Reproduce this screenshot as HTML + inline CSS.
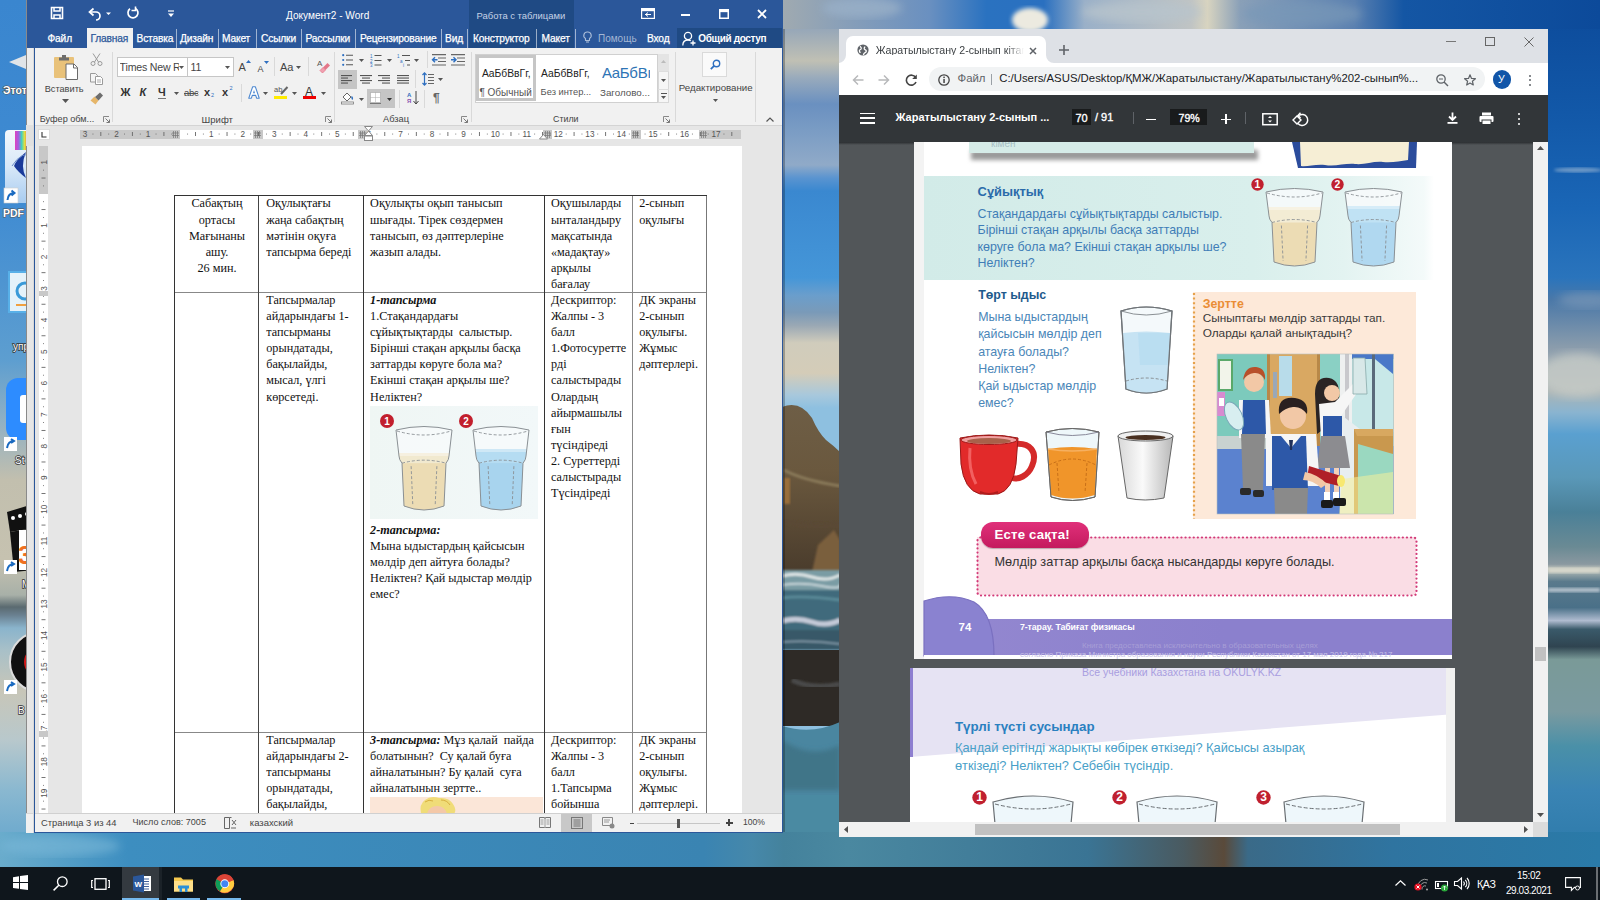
<!DOCTYPE html>
<html><head><meta charset="utf-8">
<style>
*{box-sizing:border-box}
html,body{margin:0;padding:0}
body{width:1600px;height:900px;position:relative;overflow:hidden;font-family:"Liberation Sans",sans-serif;background:#2a6fb8}
.a{position:absolute}
.t{position:absolute;white-space:nowrap;line-height:1}
.s{font-family:"Liberation Serif",serif}
svg{position:absolute;overflow:visible}
</style></head><body>
<div class="a" style="left:0;top:0;width:1600px;height:868px;overflow:hidden">
<div class="a" style="left:0px;top:0px;width:1600px;height:868px;background:linear-gradient(180deg,#1a5cae 0,#2a78c8 260px,#6f98b8 450px,#7d9aa8 540px,#5d8296 600px,#6a94ac 680px,#3f86bc 800px,#3a80b8 868px)"></div>
<div class="a" style="left:0px;top:0px;width:34px;height:868px;background:linear-gradient(180deg,#3a86cf 0,#3f8bd2 200px,#5d9ed0 360px,#8fb0c4 420px,#c2bfae 480px,#c6c2b0 560px,#a8b0a8 595px,#5a6a70 607px,#6a8090 615px,#8ab4cc 628px,#a8c0c8 650px,#c8c6b8 690px,#b8c8cc 740px,#8ab8d0 790px,#5aa0cc 868px)"></div>
<svg style="left:782px;top:0" width="58" height="868" viewBox="0 0 58 868"><defs><filter id="bl" x="-20%" y="-5%" width="140%" height="110%"><feGaussianBlur stdDeviation="2.5"/></filter><filter id="bl1"><feGaussianBlur stdDeviation="1"/></filter><linearGradient id="msky" x1="0" y1="0" x2="0" y2="1"><stop offset="0" stop-color="#7a92b0"/><stop offset=".035" stop-color="#98a8b8"/><stop offset=".07" stop-color="#c0c0b4"/><stop offset=".09" stop-color="#98aabc"/><stop offset=".12" stop-color="#6a90c0"/><stop offset=".15" stop-color="#7a9cc4"/><stop offset=".19" stop-color="#90aac8"/><stop offset=".205" stop-color="#5a94d0"/><stop offset=".22" stop-color="#3a88d0"/><stop offset=".32" stop-color="#4596d8"/><stop offset=".34" stop-color="#6a9ecc"/><stop offset=".36" stop-color="#7a9ab8"/><stop offset=".375" stop-color="#9aa8b4"/><stop offset=".395" stop-color="#d0ccbc"/><stop offset=".43" stop-color="#d4ccb8"/><stop offset=".455" stop-color="#a8c8dc"/><stop offset=".47" stop-color="#8ec0e0"/><stop offset="1" stop-color="#8ec0e0"/></linearGradient><linearGradient id="rk" x1="0" x2="0" y1="0" y2="1"><stop offset="0" stop-color="#6e5e46"/><stop offset=".4" stop-color="#6a583e"/><stop offset="1" stop-color="#4a3c2c"/></linearGradient></defs><rect width="58" height="868" fill="url(#msky)"/><path d="M0 407 Q18 400 30 418 Q36 432 44 440 Q52 446 58 452 L58 572 L0 572z" fill="url(#rk)"/><rect x="2" y="478" width="6" height="26" fill="#b07a3a" filter="url(#bl1)" opacity=".7"/><path d="M36 545 L52 530 L58 540 L58 572 L30 572z" fill="#7a5e3e" filter="url(#bl1)"/><g filter="url(#bl1)"><rect x="-2" y="570" width="62" height="22" fill="#7a9ca4"/><path d="M0 576 Q15 572 30 577 T58 575" stroke="#dfe6e6" stroke-width="3" fill="none"/><path d="M0 585 Q20 582 40 586 T58 584" stroke="#c8d6da" stroke-width="2" fill="none"/><rect x="-2" y="590" width="62" height="60" fill="#3f6a7c"/><path d="M0 598 Q20 595 58 600" stroke="#5a8a98" stroke-width="3" fill="none"/><path d="M0 621 Q15 617 30 622 T58 620" stroke="#c4cad8" stroke-width="5" fill="none"/><rect x="-2" y="630" width="62" height="20" fill="#385868"/><path d="M0 642 Q30 640 58 644" stroke="#8aa0b0" stroke-width="1.5" fill="none"/></g><path d="M2 470 Q20 480 58 486" stroke="#8a7a5a" stroke-width="3" fill="none" filter="url(#bl1)"/><path d="M0 520 Q30 530 58 525" stroke="#5a4a36" stroke-width="6" fill="none" filter="url(#bl1)"/><rect x="0" y="650" width="58" height="76" fill="#2e2a26"/><path d="M10 680 Q30 690 58 684" stroke="#4a4a48" stroke-width="5" fill="none" filter="url(#bl1)"/><path d="M0 726 Q30 735 58 722 L58 868 L0 868z" fill="#4a86a0"/><path d="M0 740 Q30 760 58 745 L58 790 L0 790z" fill="#3f7488" filter="url(#bl)"/><rect x="0" y="795" width="58" height="73" fill="#4a8aa2"/><rect x="0" y="0" width="3" height="868" fill="#000" opacity=".25"/></svg>
<svg style="left:1548px;top:0" width="52" height="868" viewBox="0 0 52 868"><defs><filter id="rb"><feGaussianBlur stdDeviation="5"/></filter><filter id="rb2"><feGaussianBlur stdDeviation="1.5"/></filter><linearGradient id="rg" x1="0" x2="0" y1="0" y2="1"><stop offset="0" stop-color="#0c4a9a"/><stop offset=".13" stop-color="#1258a8"/><stop offset=".24" stop-color="#1a66b6"/><stop offset=".32" stop-color="#2a74bc"/><stop offset=".345" stop-color="#4a78a8"/><stop offset=".40" stop-color="#8a9cac"/><stop offset=".45" stop-color="#aab4b4"/><stop offset=".475" stop-color="#8ab4d0"/><stop offset=".50" stop-color="#5aa0d0"/><stop offset=".55" stop-color="#5a98b8"/><stop offset=".59" stop-color="#4a8098"/><stop offset=".63" stop-color="#6a8a94"/><stop offset=".65" stop-color="#8a98a0"/><stop offset=".655" stop-color="#c0c4bc"/><stop offset=".67" stop-color="#5a7a8c"/><stop offset=".70" stop-color="#4a7088"/><stop offset=".715" stop-color="#b0bcd0"/><stop offset=".725" stop-color="#3a5a6a"/><stop offset=".745" stop-color="#2f4450"/><stop offset=".76" stop-color="#7a9a98"/><stop offset=".82" stop-color="#7a9aa0"/><stop offset=".86" stop-color="#4a90a8"/><stop offset=".91" stop-color="#3a84b4"/><stop offset="1" stop-color="#2a78a8"/></linearGradient></defs><rect width="52" height="868" fill="url(#rg)"/><ellipse cx="30" cy="170" rx="24" ry="2.5" fill="#a8c0d8" filter="url(#rb2)" opacity=".6"/><ellipse cx="30" cy="375" rx="40" ry="22" fill="#c8ccc8" filter="url(#rb)" opacity=".8"/><ellipse cx="40" cy="300" rx="30" ry="8" fill="#7a98b8" filter="url(#rb)" opacity=".7"/><rect x="0" y="568" width="52" height="5" fill="#d8d8cc" filter="url(#rb2)"/><rect x="0" y="588" width="52" height="4" fill="#d0d8e0" filter="url(#rb2)" opacity=".8"/></svg>
<svg style="left:782px;top:0" width="818" height="29" viewBox="0 0 818 29"><defs><filter id="tb"><feGaussianBlur stdDeviation="4"/></filter><filter id="tb2"><feGaussianBlur stdDeviation="2"/></filter><linearGradient id="tg" x1="0" x2="1"><stop offset="0" stop-color="#a0aab0"/><stop offset=".07" stop-color="#8aa0b8"/><stop offset=".18" stop-color="#6a90c0"/><stop offset=".25" stop-color="#2a72c0"/><stop offset=".32" stop-color="#2a70c0"/><stop offset=".37" stop-color="#9ab0c8"/><stop offset=".50" stop-color="#c0c4c4"/><stop offset=".52" stop-color="#d8d4c0"/><stop offset=".56" stop-color="#8aa0b8"/><stop offset=".70" stop-color="#5a80b0"/><stop offset=".76" stop-color="#1456a4"/><stop offset="1" stop-color="#0c4a9a"/></linearGradient></defs><rect width="818" height="29" fill="url(#tg)"/><ellipse cx="248" cy="20" rx="18" ry="12" fill="#eceae0" filter="url(#tb2)"/><ellipse cx="80" cy="8" rx="40" ry="10" fill="#9ab0c8" filter="url(#tb)" opacity=".8"/><ellipse cx="360" cy="12" rx="60" ry="10" fill="#b8c4cc" filter="url(#tb)" opacity=".8"/><ellipse cx="520" cy="14" rx="60" ry="12" fill="#7898b8" filter="url(#tb)" opacity=".7"/></svg>
<svg style="left:0;top:832px" width="1600" height="36" viewBox="0 0 1600 36"><defs><filter id="bb"><feGaussianBlur stdDeviation="4"/></filter><linearGradient id="bg2" x1="0" x2="1"><stop offset="0" stop-color="#6aaccc"/><stop offset=".03" stop-color="#5aa2c8"/><stop offset=".08" stop-color="#3d8ec0"/><stop offset=".44" stop-color="#3a84b2"/><stop offset=".47" stop-color="#4688aa"/><stop offset=".49" stop-color="#44829c"/><stop offset=".53" stop-color="#4a88a0"/><stop offset=".68" stop-color="#3a7494"/><stop offset=".74" stop-color="#4a5a60"/><stop offset=".765" stop-color="#5a4a3a"/><stop offset=".78" stop-color="#3a6a88"/><stop offset=".87" stop-color="#2f74a0"/><stop offset="1" stop-color="#2a7aa8"/></linearGradient></defs><rect width="1600" height="36" fill="url(#bg2)"/><ellipse cx="60" cy="14" rx="60" ry="10" fill="#7ab8d8" filter="url(#bb)" opacity=".6"/></svg>
<svg style="left:0;top:0" width="34" height="868" viewBox="0 0 34 868"><path d="M9 62 L26 55 L26 69z" fill="#e0e4e8"/><text x="3" y="94" font-size="10.5" fill="#fff" font-weight="bold" font-family="Liberation Sans" style="paint-order:stroke" stroke="#555" stroke-width="1.2">Этот</text><defs><linearGradient id="pdfg" x1="0" y1="0" x2="0" y2="1"><stop offset="0" stop-color="#f4f8fc"/><stop offset=".5" stop-color="#d8e8f8"/><stop offset="1" stop-color="#a8ccf0"/></linearGradient><linearGradient id="rbw" x1="0" x2="1"><stop offset="0" stop-color="#e040c0"/><stop offset=".3" stop-color="#a060e0"/><stop offset=".55" stop-color="#40d0c0"/><stop offset=".8" stop-color="#e0e040"/><stop offset="1" stop-color="#f08040"/></linearGradient></defs><rect x="5" y="130" width="30" height="73" rx="4" fill="url(#pdfg)"/><rect x="15" y="131" width="12" height="19" fill="url(#rbw)"/><path d="M26 152 Q16 160 14 166 Q18 172 26 178 Q20 166 26 152z" fill="#1a3a9a"/><path d="M12 166 Q22 150 34 156" stroke="#6a8ac8" stroke-width="1" fill="none"/><rect x="4" y="188" width="14" height="15" fill="#fff" stroke="#ccc" stroke-width=".6"/><path d="M7.5 200 Q8 193 14.5 193 M11.5 190.5l3 2.5-3 2.5" stroke="#1a6ac0" stroke-width="2" fill="none"/><text x="3" y="217" font-size="10.5" fill="#fff" font-weight="bold" font-family="Liberation Sans" style="paint-order:stroke" stroke="#555" stroke-width="1.2">PDF</text><rect x="9" y="272" width="26" height="40" fill="#e4f2fa" stroke="#58b0e8" stroke-width="2"/><circle cx="25" cy="291" r="8" fill="none" stroke="#3a9ad8" stroke-width="3"/><rect x="16" y="304" width="14" height="2" fill="#f0a040"/><text x="13" y="350" font-size="10" fill="#fff" font-family="Liberation Sans" style="paint-order:stroke" stroke="#333" stroke-width="1.5">упр</text><rect x="6" y="378" width="32" height="62" rx="12" fill="#2d8cff"/><rect x="20" y="395" width="14" height="28" rx="3" fill="#fff"/><rect x="4" y="437" width="13" height="14" fill="#fff"/><path d="M7 448 Q8 441 14 441 M11 439l3 2-3 2" stroke="#1a6ac0" stroke-width="2" fill="none"/><text x="15" y="464" font-size="10" fill="#fff" font-family="Liberation Sans" style="paint-order:stroke" stroke="#333" stroke-width="1.5">St</text><path d="M7 512 L30 505 L34 508 L34 528 L10 532z" fill="#111"/><circle cx="13" cy="518" r="2" fill="#fff"/><circle cx="20" cy="516" r="2" fill="#fff"/><circle cx="27" cy="514" r="2" fill="#fff"/><path d="M10 532 L34 528 L34 570 L14 572z" fill="#111"/><rect x="19" y="530" width="15" height="40" fill="#fff"/><text x="18" y="564" font-size="26" fill="#f07020" font-weight="bold" font-family="Liberation Sans">3</text><rect x="4" y="560" width="13" height="14" fill="#fff"/><path d="M7 571 Q8 564 14 564 M11 562l3 2-3 2" stroke="#1a6ac0" stroke-width="2" fill="none"/><text x="22" y="588" font-size="10" fill="#fff" font-family="Liberation Sans" style="paint-order:stroke" stroke="#333" stroke-width="1.5">M</text><circle cx="40" cy="662" r="30" fill="#111" stroke="#ddd" stroke-width="2"/><circle cx="40" cy="662" r="16" fill="#d01818"/><rect x="4" y="680" width="13" height="14" fill="#fff"/><path d="M7 691 Q8 684 14 684 M11 682l3 2-3 2" stroke="#1a6ac0" stroke-width="2" fill="none"/><text x="18" y="714" font-size="10" fill="#fff" font-family="Liberation Sans" style="paint-order:stroke" stroke="#333" stroke-width="1.5">B</text></svg>
</div>
<div class="a" style="left:26px;top:0px;width:8px;height:833px;background:#ececec"></div>
<div class="a" style="left:26px;top:0px;width:8px;height:48px;background:#2b579a"></div>
<div class="a" style="left:26px;top:0px;width:1px;height:833px;background:#8a8a8a"></div>
<div class="a" style="left:26px;top:125px;width:8px;height:21px;background:#e0e0e0"></div>
<div class="a" style="left:27px;top:146px;width:6px;height:667px;background:#e6e6e6"></div>
<div class="a" style="left:26px;top:813px;width:8px;height:20px;background:#f0f0f0;border-top:1px solid #d6d6d6"></div>
<div class="a" style="left:33px;top:48px;width:1px;height:785px;background:#d8d8d8"></div>
<div class="a" style="left:34px;top:0;width:749px;height:833px;overflow:hidden;background:#e6e6e6">
<div class="a" style="left:0px;top:0px;width:749px;height:48px;background:#2b579a"></div>
<div class="a" style="left:435px;top:0px;width:105px;height:48px;background:#1f4a84"></div>
<div class="a" style="left:643px;top:28px;width:106px;height:20px;background:#1f4a84"></div>
<svg style="left:16px;top:6px" width="14" height="14" viewBox="0 0 14 14"><path d="M1.5 1.5h11v11h-11z" fill="none" stroke="#fff" stroke-width="1.6"/><path d="M4 1.5v3.5h6v-3.5" fill="none" stroke="#fff" stroke-width="1.5"/><path d="M4 12.5v-3.5h6v3.5" fill="none" stroke="#fff" stroke-width="1.5"/></svg>
<svg style="left:53px;top:7px" width="24" height="13" viewBox="0 0 24 13"><path d="M3 5h6a4 4 0 0 1 0 8" fill="none" stroke="#fff" stroke-width="1.7"/><path d="M6.5 1.5L2.5 5l4 3.5" fill="none" stroke="#fff" stroke-width="1.7"/><path d="M19 5.5l2.5 2.5 2.5-2.5z" fill="#fff"/></svg>
<svg style="left:92px;top:6px" width="14" height="14" viewBox="0 0 14 14"><path d="M9.5 2.5A5 5 0 1 1 4 2.8" fill="none" stroke="#fff" stroke-width="1.7"/><path d="M9.5 0.5v4h-4" fill="none" stroke="#fff" stroke-width="1.6"/></svg>
<svg style="left:133px;top:10px" width="8" height="8" viewBox="0 0 8 8"><path d="M1 1h6" stroke="#fff" stroke-width="1.2"/><path d="M1 3.5h6L4 7z" fill="#fff"/></svg>
<div class="t" style="left:252px;top:10.5px;color:#fff;font-size:10.1px">Документ2 - Word</div>
<div class="t" style="left:442.5px;top:11px;color:#c5d2e6;font-size:9.45px">Работа с таблицами</div>
<svg style="left:607px;top:8px" width="14" height="11" viewBox="0 0 14 11"><rect x="0.6" y="0.6" width="12.8" height="9.8" fill="none" stroke="#fff" stroke-width="1.2"/><rect x="0.6" y="0.6" width="12.8" height="2.6" fill="#fff"/><path d="M4 6.5h6M7 4.5l-2.5 2 2.5 2" stroke="#fff" stroke-width="1" fill="none"/></svg>
<div class="a" style="left:647px;top:14px;width:9px;height:2px;background:#fff"></div>
<svg style="left:685px;top:8.5px" width="10" height="10" viewBox="0 0 10 10"><rect x="0.75" y="0.75" width="8.5" height="8.5" fill="none" stroke="#fff" stroke-width="1.5"/><rect x="0.75" y="0.75" width="8.5" height="2.4" fill="#fff"/></svg>
<svg style="left:723px;top:8.5px" width="10" height="10" viewBox="0 0 10 10"><path d="M1 1l8 8M9 1l-8 8" stroke="#fff" stroke-width="1.8"/></svg>
<div class="a" style="left:53px;top:28px;width:46px;height:21px;background:#f1f1f1"></div>
<div class="t" style="left:13.5px;top:33.5px;color:#fff;font-size:10.2px;letter-spacing:-0.15px;-webkit-text-stroke:0.25px #fff">Файл</div>
<div class="t" style="left:56.5px;top:33.5px;color:#2b579a;font-size:10.2px;letter-spacing:-0.15px;-webkit-text-stroke:0.25px #2b579a">Главная</div>
<div class="t" style="left:102.5px;top:33.5px;color:#fff;font-size:10.2px;letter-spacing:-0.15px;-webkit-text-stroke:0.25px #fff">Вставка</div>
<div class="t" style="left:146px;top:33.5px;color:#fff;font-size:10.2px;letter-spacing:-0.15px;-webkit-text-stroke:0.25px #fff">Дизайн</div>
<div class="t" style="left:188px;top:33.5px;color:#fff;font-size:10.2px;letter-spacing:-0.15px;-webkit-text-stroke:0.25px #fff">Макет</div>
<div class="t" style="left:227px;top:33.5px;color:#fff;font-size:10.2px;letter-spacing:-0.15px;-webkit-text-stroke:0.25px #fff">Ссылки</div>
<div class="t" style="left:271.5px;top:33.5px;color:#fff;font-size:10.2px;letter-spacing:-0.15px;-webkit-text-stroke:0.25px #fff">Рассылки</div>
<div class="t" style="left:326px;top:33.5px;color:#fff;font-size:10.2px;letter-spacing:-0.15px;-webkit-text-stroke:0.25px #fff">Рецензирование</div>
<div class="t" style="left:411px;top:33.5px;color:#fff;font-size:10.2px;letter-spacing:-0.15px;-webkit-text-stroke:0.25px #fff">Вид</div>
<div class="t" style="left:439px;top:33.5px;color:#fff;font-size:10.2px;letter-spacing:-0.15px;-webkit-text-stroke:0.25px #fff">Конструктор</div>
<div class="t" style="left:507.6px;top:33.5px;color:#fff;font-size:10.2px;letter-spacing:-0.15px;-webkit-text-stroke:0.25px #fff">Макет</div>
<div class="t" style="left:613px;top:33.5px;color:#fff;font-size:10.2px;letter-spacing:-0.15px;-webkit-text-stroke:0.25px #fff">Вход</div>
<div class="a" style="left:142px;top:29px;width:1px;height:19px;background:rgba(255,255,255,.55)"></div>
<div class="a" style="left:184px;top:29px;width:1px;height:19px;background:rgba(255,255,255,.55)"></div>
<div class="a" style="left:222.25px;top:29px;width:1px;height:19px;background:rgba(255,255,255,.55)"></div>
<div class="a" style="left:267.25px;top:29px;width:1px;height:19px;background:rgba(255,255,255,.55)"></div>
<div class="a" style="left:321.4px;top:29px;width:1px;height:19px;background:rgba(255,255,255,.55)"></div>
<div class="a" style="left:406.6px;top:29px;width:1px;height:19px;background:rgba(255,255,255,.55)"></div>
<div class="a" style="left:432.5px;top:29px;width:1px;height:19px;background:rgba(255,255,255,.55)"></div>
<div class="a" style="left:502.4px;top:29px;width:1px;height:19px;background:rgba(255,255,255,.55)"></div>
<div class="a" style="left:540.5px;top:29px;width:1px;height:19px;background:rgba(255,255,255,.55)"></div>
<svg style="left:549px;top:31px" width="9" height="13" viewBox="0 0 9 13"><path d="M4.5 1A3.5 3.5 0 0 0 2.5 7.5v2h4v-2A3.5 3.5 0 0 0 4.5 1z" fill="none" stroke="#a9bcd8" stroke-width="1.1"/><path d="M3 11h3" stroke="#a9bcd8" stroke-width="1.1"/></svg>
<div class="t" style="left:564px;top:34px;color:#a3b6d3;font-size:10px;width:39px;overflow:hidden">Помощь</div>
<svg style="left:648px;top:31px" width="14" height="15" viewBox="0 0 14 15"><circle cx="6" cy="5" r="3.6" fill="none" stroke="#fff" stroke-width="1.3"/><path d="M0.8 14.5c0-3.5 2.2-5.5 5.2-5.5 1.2 0 2 .3 2.8.8" fill="none" stroke="#fff" stroke-width="1.3"/><path d="M11 9.5v5M8.5 12h5" stroke="#fff" stroke-width="1.3"/></svg>
<div class="t" style="left:664.3px;top:33.5px;color:#fff;font-size:10px;font-weight:bold;letter-spacing:-0.35px">Общий доступ</div>
<div class="a" style="left:0px;top:48px;width:749px;height:77px;background:#f1f1f1"></div>
<div class="a" style="left:0px;top:124.5px;width:749px;height:1px;background:#d4d4d4"></div>
<div class="a" style="left:78px;top:52px;width:1px;height:70px;background:#d9d9d9"></div>
<div class="a" style="left:300.4px;top:52px;width:1px;height:70px;background:#d9d9d9"></div>
<div class="a" style="left:436.6px;top:52px;width:1px;height:70px;background:#d9d9d9"></div>
<div class="a" style="left:641.2px;top:52px;width:1px;height:70px;background:#d9d9d9"></div>
<div class="a" style="left:721.4px;top:52px;width:1px;height:70px;background:#d9d9d9"></div>
<div class="t" style="left:5.8px;top:114.5px;color:#444;font-size:9.6px;font-size:9.15px">Буфер обм...</div>
<div class="t" style="left:167.6px;top:114.5px;color:#444;font-size:9.6px;font-size:9.5px">Шрифт</div>
<div class="t" style="left:349px;top:114.5px;color:#444;font-size:9.6px;font-size:9.3px">Абзац</div>
<div class="t" style="left:519px;top:114.5px;color:#444;font-size:9.6px;font-size:8.9px">Стили</div>
<svg style="left:69px;top:116px" width="7" height="7" viewBox="0 0 7 7"><path d="M0.5 6V0.5H6" fill="none" stroke="#888" stroke-width="1"/><path d="M2.5 2.5L6.5 6.5M6.5 3.5v3h-3" fill="none" stroke="#777" stroke-width="1"/></svg>
<svg style="left:291px;top:116px" width="7" height="7" viewBox="0 0 7 7"><path d="M0.5 6V0.5H6" fill="none" stroke="#888" stroke-width="1"/><path d="M2.5 2.5L6.5 6.5M6.5 3.5v3h-3" fill="none" stroke="#777" stroke-width="1"/></svg>
<svg style="left:427px;top:116px" width="7" height="7" viewBox="0 0 7 7"><path d="M0.5 6V0.5H6" fill="none" stroke="#888" stroke-width="1"/><path d="M2.5 2.5L6.5 6.5M6.5 3.5v3h-3" fill="none" stroke="#777" stroke-width="1"/></svg>
<svg style="left:629px;top:116px" width="7" height="7" viewBox="0 0 7 7"><path d="M0.5 6V0.5H6" fill="none" stroke="#888" stroke-width="1"/><path d="M2.5 2.5L6.5 6.5M6.5 3.5v3h-3" fill="none" stroke="#777" stroke-width="1"/></svg>
<svg style="left:20px;top:54px" width="26" height="27" viewBox="0 0 26 27"><rect x="0" y="3" width="20" height="21" rx="1" fill="#e9c27a"/><path d="M5 6.5V3.5h3v-2.5h4v2.5h3v3z" fill="#6d6d6d"/><path d="M12 10h8l3.5 3.5V25.5H12z" fill="#fff" stroke="#6a6a6a" stroke-width="1"/><path d="M19.5 10v4h4" fill="none" stroke="#6a6a6a" stroke-width="1"/></svg>
<div class="t" style="left:10.7px;top:84.5px;color:#444;font-size:9.2px">Вставить</div>
<svg style="left:27.5px;top:99px" width="7" height="4" viewBox="0 0 7 4"><path d="M0 0h7L3.5 4z" fill="#555"/></svg>
<svg style="left:56px;top:53px" width="13" height="13" viewBox="0 0 13 13"><path d="M3 0.5l5.5 8.5M10 0.5L4.5 9" stroke="#9a9a9a" stroke-width="1"/><circle cx="3" cy="10.5" r="2" fill="none" stroke="#9a9a9a"/><circle cx="10" cy="10.5" r="2" fill="none" stroke="#9a9a9a"/></svg>
<svg style="left:56px;top:73px" width="13" height="12" viewBox="0 0 13 12"><path d="M0.5 0.5h5l2 2V9h-7z" fill="#f4f4f4" stroke="#9a9a9a"/><path d="M5.5 3.5h5l2 2v6h-7z" fill="#fff" stroke="#9a9a9a"/><path d="M7 7h4M7 9h4" stroke="#aaa"/></svg>
<svg style="left:55.5px;top:92px" width="14" height="13" viewBox="0 0 14 13"><path d="M0.5 8.5l4-4 4 4-3 4z" fill="#e6b66a"/><path d="M5 5l5-4.5 3 3-4.5 5z" fill="#6d6d6d"/></svg>
<div class="a" style="left:83px;top:57px;width:70.5px;height:20px;background:#fff;border:1px solid #c6c6c6"></div>
<div class="a" style="left:152.5px;top:57px;width:47px;height:20px;background:#fff;border:1px solid #c6c6c6"></div>
<div class="t" style="left:85.6px;top:62px;color:#444;font-size:10.6px;width:59px;overflow:hidden;letter-spacing:-0.2px">Times New R</div>
<div class="t" style="left:156.4px;top:62px;color:#444;font-size:10.6px">11</div>
<svg style="left:144.5px;top:66.3px" width="5" height="3" viewBox="0 0 5 3"><path d="M0 0h5L2.5 3z" fill="#555"/></svg>
<svg style="left:190.5px;top:66.3px" width="5" height="3" viewBox="0 0 5 3"><path d="M0 0h5L2.5 3z" fill="#555"/></svg>
<div class="t" style="left:204.5px;top:62px;color:#444;font-size:11px">A</div>
<svg style="left:211.5px;top:60px" width="5" height="3" viewBox="0 0 5 3"><path d="M0 3h5L2.5 0z" fill="#2e6fc0"/></svg>
<div class="t" style="left:223.5px;top:64.5px;color:#444;font-size:9px">A</div>
<svg style="left:230px;top:60.5px" width="5" height="3" viewBox="0 0 5 3"><path d="M0 0h5L2.5 3z" fill="#2e6fc0"/></svg>
<div class="a" style="left:239.6px;top:57px;width:1px;height:19px;background:#d9d9d9"></div>
<div class="t" style="left:246px;top:62px;color:#444;font-size:11px">Aa</div>
<svg style="left:262.0px;top:66.3px" width="5" height="3" viewBox="0 0 5 3"><path d="M0 0h5L2.5 3z" fill="#555"/></svg>
<div class="a" style="left:274.4px;top:57px;width:1px;height:19px;background:#d9d9d9"></div>
<div class="t" style="left:283px;top:60px;color:#555;font-size:8px">A</div>
<svg style="left:284px;top:62px" width="12" height="12" viewBox="0 0 12 12"><path d="M5 5.5l4.5-4.5 2.5 2.5-4.5 4.5z" fill="#e4778a"/><path d="M2 8.5l3-3 2.5 2.5-3 3z" fill="#f0a0b0" stroke="#e4778a" stroke-width=".8"/></svg>
<div class="t" style="left:86.5px;top:87px;color:#333;font-size:11px;font-weight:bold">Ж</div>
<div class="t" style="left:105.5px;top:87px;color:#333;font-size:11px;font-weight:bold;font-style:italic">К</div>
<div class="t" style="left:124px;top:87px;color:#333;font-size:11px;font-weight:bold">Ч</div>
<div class="a" style="left:124px;top:97.5px;width:8px;height:1px;background:#777"></div>
<svg style="left:139.5px;top:92.3px" width="5" height="3" viewBox="0 0 5 3"><path d="M0 0h5L2.5 3z" fill="#555"/></svg>
<div class="t" style="left:150px;top:88px;color:#444;font-size:9.5px;letter-spacing:-0.3px">abc</div>
<div class="a" style="left:150px;top:93px;width:14px;height:1px;background:#555"></div>
<div class="t" style="left:170px;top:87px;color:#333;font-size:11px;font-weight:bold">x</div>
<div class="t" style="left:177px;top:93px;color:#2e6fc0;font-size:5.5px">2</div>
<div class="t" style="left:188px;top:87px;color:#333;font-size:11px;font-weight:bold">x</div>
<div class="t" style="left:195.5px;top:86px;color:#2e6fc0;font-size:5.5px">2</div>
<div class="a" style="left:206.5px;top:83.5px;width:1px;height:18px;background:#d9d9d9"></div>
<svg style="left:213.5px;top:85.5px" width="12" height="13" viewBox="0 0 12 13"><path d="M0.8 12.2L4.6 0.8h2.8L11.2 12.2h-2.6l-0.9-2.8H4.3l-0.9 2.8z" fill="#fff" stroke="#4a86d0" stroke-width="1.1" stroke-linejoin="round"/><path d="M5 7.2h2L6 4z" fill="#4a86d0"/></svg>
<svg style="left:229.0px;top:92.3px" width="5" height="3" viewBox="0 0 5 3"><path d="M0 0h5L2.5 3z" fill="#555"/></svg>
<div class="t" style="left:240px;top:86px;color:#555;font-size:7.5px">ab</div>
<svg style="left:246px;top:86px" width="8" height="9" viewBox="0 0 8 9"><path d="M1 8L7.5 1" stroke="#666" stroke-width="2"/></svg>
<div class="a" style="left:240px;top:96px;width:13px;height:3px;background:#ffeb00"></div>
<svg style="left:258.0px;top:92.3px" width="5" height="3" viewBox="0 0 5 3"><path d="M0 0h5L2.5 3z" fill="#555"/></svg>
<div class="t" style="left:271px;top:86px;color:#333;font-size:12px">A</div>
<div class="a" style="left:268.7px;top:96px;width:13.3px;height:3px;background:#e00"></div>
<svg style="left:286.5px;top:92.3px" width="5" height="3" viewBox="0 0 5 3"><path d="M0 0h5L2.5 3z" fill="#555"/></svg>
<svg style="left:307.5px;top:54px" width="12" height="12" viewBox="0 0 12 12"><circle cx="1.2" cy="1.2" r="1.1" fill="#2e6fc0"/><circle cx="1.2" cy="6" r="1.1" fill="#2e6fc0"/><circle cx="1.2" cy="10.8" r="1.1" fill="#2e6fc0"/><path d="M4 1.2h7M4 6h7M4 10.8h7" stroke="#555" stroke-width="1.1"/></svg>
<svg style="left:324.5px;top:59.3px" width="5" height="3" viewBox="0 0 5 3"><path d="M0 0h5L2.5 3z" fill="#555"/></svg>
<svg style="left:335.7px;top:53.5px" width="12" height="13" viewBox="0 0 12 13"><text x="0" y="4" font-size="4.5" fill="#2e6fc0" font-family="Liberation Sans">1</text><text x="0" y="8.5" font-size="4.5" fill="#2e6fc0" font-family="Liberation Sans">2</text><text x="0" y="13" font-size="4.5" fill="#2e6fc0" font-family="Liberation Sans">3</text><path d="M4.5 1.5h7M4.5 6.5h7M4.5 11h7" stroke="#555" stroke-width="1.1"/></svg>
<svg style="left:353.1px;top:59.3px" width="5" height="3" viewBox="0 0 5 3"><path d="M0 0h5L2.5 3z" fill="#555"/></svg>
<svg style="left:363.2px;top:53.5px" width="14" height="13" viewBox="0 0 14 13"><text x="0" y="4" font-size="4.5" fill="#2e6fc0" font-family="Liberation Sans">1</text><text x="3" y="8.5" font-size="4.5" fill="#2e6fc0" font-family="Liberation Sans">a</text><text x="6" y="13" font-size="4.5" fill="#2e6fc0" font-family="Liberation Sans">i</text><path d="M5 1.5h8M8 6.5h5M10 11h3" stroke="#555" stroke-width="1.1"/></svg>
<svg style="left:379.5px;top:59.3px" width="5" height="3" viewBox="0 0 5 3"><path d="M0 0h5L2.5 3z" fill="#555"/></svg>
<div class="a" style="left:392.6px;top:51px;width:1px;height:17px;background:#d9d9d9"></div>
<svg style="left:398.3px;top:54px" width="14" height="12" viewBox="0 0 14 12"><path d="M0 0.6h14M6 4h8M6 7.5h8M0 11h14" stroke="#666" stroke-width="1.1"/><path d="M0.5 5.8h5M3 3.3L0.5 5.8 3 8.3" fill="none" stroke="#2e6fc0" stroke-width="1.4"/></svg>
<svg style="left:416.6px;top:54px" width="14" height="12" viewBox="0 0 14 12"><path d="M0 0.6h14M6 4h8M6 7.5h8M0 11h14" stroke="#666" stroke-width="1.1"/><path d="M0 5.8h5M2.5 3.3L5 5.8 2.5 8.3" fill="none" stroke="#2e6fc0" stroke-width="1.4"/></svg>
<div class="a" style="left:304px;top:70.2px;width:18.7px;height:18.7px;background:#c5c5c5"></div>
<svg style="left:307px;top:74.5px" width="14" height="10" viewBox="0 0 14 10"><rect x="0" y="0.0" width="11" height="1.1" fill="#555"/><rect x="0" y="2.5" width="7" height="1.1" fill="#555"/><rect x="0" y="5.0" width="11" height="1.1" fill="#555"/><rect x="0" y="7.5" width="7" height="1.1" fill="#555"/></svg>
<svg style="left:326px;top:74.5px" width="14" height="10" viewBox="0 0 14 10"><rect x="0" y="0.0" width="12" height="1.1" fill="#555"/><rect x="2" y="2.5" width="8" height="1.1" fill="#555"/><rect x="0" y="5.0" width="12" height="1.1" fill="#555"/><rect x="2" y="7.5" width="8" height="1.1" fill="#555"/></svg>
<svg style="left:344px;top:74.5px" width="14" height="10" viewBox="0 0 14 10"><rect x="0" y="0.0" width="12" height="1.1" fill="#555"/><rect x="4" y="2.5" width="8" height="1.1" fill="#555"/><rect x="0" y="5.0" width="12" height="1.1" fill="#555"/><rect x="4" y="7.5" width="8" height="1.1" fill="#555"/></svg>
<svg style="left:362.8px;top:74.5px" width="14" height="10" viewBox="0 0 14 10"><rect x="0" y="0.0" width="12" height="1.1" fill="#555"/><rect x="0" y="2.5" width="12" height="1.1" fill="#555"/><rect x="0" y="5.0" width="12" height="1.1" fill="#555"/><rect x="0" y="7.5" width="12" height="1.1" fill="#555"/></svg>
<div class="a" style="left:381.4px;top:70px;width:1px;height:18px;background:#d9d9d9"></div>
<svg style="left:388px;top:72px" width="12" height="14" viewBox="0 0 12 14"><path d="M2.5 1v12M0.5 3l2-2.2 2 2.2M0.5 11l2 2.2 2-2.2" fill="none" stroke="#2e6fc0" stroke-width="1.2"/><path d="M6 2.5h6M6 5.5h6M6 8.5h6M6 11.5h6" stroke="#666" stroke-width="1.1"/></svg>
<svg style="left:403.5px;top:78.3px" width="5" height="3" viewBox="0 0 5 3"><path d="M0 0h5L2.5 3z" fill="#555"/></svg>
<svg style="left:307px;top:91px" width="13" height="13" viewBox="0 0 13 13"><path d="M2 6l4-4 4 4-4 4z" fill="#fff" stroke="#666"/><path d="M10.5 5.5c1 1 1.2 2 .5 3" stroke="#2e6fc0" stroke-width="1.5" fill="none"/><rect x="0.5" y="11" width="12" height="2" fill="#fff" stroke="#777" stroke-width=".8"/></svg>
<svg style="left:324.5px;top:98.3px" width="5" height="3" viewBox="0 0 5 3"><path d="M0 0h5L2.5 3z" fill="#555"/></svg>
<div class="a" style="left:333px;top:89.3px;width:27.7px;height:18.4px;background:#c5c5c5"></div>
<svg style="left:336px;top:92px" width="11" height="12" viewBox="0 0 11 12"><rect x="0.5" y="0.5" width="10" height="10" fill="#fff" stroke="#999" stroke-dasharray="1 1"/><path d="M5.5 0.5v10M0.5 5.5h10" stroke="#aaa" stroke-dasharray="1 1"/><path d="M0 11.5h11" stroke="#777"/></svg>
<svg style="left:353.0px;top:98.3px" width="5" height="3" viewBox="0 0 5 3"><path d="M0 0h5L2.5 3z" fill="#333"/></svg>
<div class="a" style="left:364.5px;top:89.5px;width:1px;height:18px;background:#d9d9d9"></div>
<div class="t" style="left:373px;top:92px;color:#2e6fc0;font-size:6px;font-weight:bold">А</div>
<div class="t" style="left:373px;top:98px;color:#8a4fb0;font-size:6px;font-weight:bold">Я</div>
<svg style="left:379px;top:91px" width="6" height="14" viewBox="0 0 6 14"><path d="M3 0v13M0.5 10l2.5 3 2.5-3" fill="none" stroke="#444" stroke-width="1"/></svg>
<div class="a" style="left:390.4px;top:89.5px;width:1px;height:18px;background:#d9d9d9"></div>
<div class="t" style="left:399px;top:92px;color:#666;font-size:12px;font-weight:bold">¶</div>
<div class="a" style="left:441.25px;top:53.6px;width:182.5px;height:49.5px;background:#fff;border:1px solid #d0d0d0"></div>
<div class="a" style="left:442px;top:55px;width:59.6px;height:46px;border:3px solid #c6c6c6"></div>
<div class="t" style="left:447.9px;top:68.5px;color:#222;font-size:10.3px">АаБбВвГг,</div>
<div class="t" style="left:445.4px;top:88px;color:#555;font-size:10px">¶ Обычный</div>
<div class="t" style="left:507px;top:68.5px;color:#222;font-size:10.3px">АаБбВвГг,</div>
<div class="t" style="left:506.6px;top:88px;color:#555;font-size:9.3px">Без интер...</div>
<div class="t" style="left:567.9px;top:65px;color:#2e74b5;font-size:15px;width:48px;overflow:hidden;letter-spacing:-0.3px">АаБбВı</div>
<div class="t" style="left:566px;top:88px;color:#555;font-size:9.8px">Заголово...</div>
<div class="a" style="left:623.5px;top:53.6px;width:11.5px;height:49.5px;background:#f6f6f6;border:1px solid #d8d8d8"></div>
<div class="a" style="left:624px;top:54px;width:10.5px;height:17px;background:#e4e4e4"></div>
<div class="a" style="left:624px;top:71px;width:10.5px;height:1px;background:#dedede"></div>
<div class="a" style="left:624px;top:88.5px;width:10.5px;height:1px;background:#dedede"></div>
<svg style="left:627px;top:60px" width="5" height="3" viewBox="0 0 5 3"><path d="M0 3h5L2.5 0z" fill="#bbb"/></svg>
<svg style="left:627.0px;top:79.3px" width="5" height="3" viewBox="0 0 5 3"><path d="M0 0h5L2.5 3z" fill="#555"/></svg>
<div class="a" style="left:626.5px;top:93px;width:6px;height:1px;background:#555"></div>
<svg style="left:627.0px;top:95.8px" width="5" height="3" viewBox="0 0 5 3"><path d="M0 0h5L2.5 3z" fill="#555"/></svg>
<div class="a" style="left:668.3px;top:52px;width:25.2px;height:24.6px;background:#fafafa;border:1px solid #dadada"></div>
<svg style="left:676px;top:59px" width="11" height="11" viewBox="0 0 11 11"><circle cx="6.5" cy="4.5" r="3.2" fill="none" stroke="#2e6fc0" stroke-width="1.4"/><path d="M4.3 6.7L0.8 10.2" stroke="#2e6fc0" stroke-width="1.8"/></svg>
<div class="t" style="left:644.8px;top:83px;color:#444;font-size:9.7px">Редактирование</div>
<svg style="left:679.0px;top:99.3px" width="5" height="3" viewBox="0 0 5 3"><path d="M0 0h5L2.5 3z" fill="#555"/></svg>
<svg style="left:732px;top:117px" width="8" height="5" viewBox="0 0 8 5"><path d="M0.5 4.5L4 1l3.5 3.5" fill="none" stroke="#555" stroke-width="1.2"/></svg>
<div class="a" style="left:3.8px;top:129px;width:12.4px;height:11px;background:#fff;border:1px solid #dcdcdc"></div>
<svg style="left:7px;top:132px" width="6" height="6" viewBox="0 0 6 6"><path d="M1 0v5h4.5" fill="none" stroke="#333" stroke-width="1.1"/></svg>
<div class="a" style="left:46px;top:130px;width:660.5px;height:8.5px;background:#c8c8c8"></div>
<div class="a" style="left:145.7px;top:130px;width:519.3px;height:8.5px;background:#fff"></div>
<div class="a" style="left:136.5px;top:130px;width:9.5px;height:8.5px;background:#c8c8c8"></div>
<svg style="left:137.5px;top:131px" width="8" height="7" viewBox="0 0 8 7"><path d="M1.5 0v7M3.5 0v7M5.5 0v7M0 2h7M0 4.5h7" stroke="#777" stroke-width=".7"/></svg>
<div class="a" style="left:219px;top:130px;width:9.5px;height:8.5px;background:#c8c8c8"></div>
<svg style="left:220px;top:131px" width="8" height="7" viewBox="0 0 8 7"><path d="M1.5 0v7M3.5 0v7M5.5 0v7M0 2h7M0 4.5h7" stroke="#777" stroke-width=".7"/></svg>
<div class="a" style="left:323.6px;top:130px;width:9.5px;height:8.5px;background:#c8c8c8"></div>
<svg style="left:324.6px;top:131px" width="8" height="7" viewBox="0 0 8 7"><path d="M1.5 0v7M3.5 0v7M5.5 0v7M0 2h7M0 4.5h7" stroke="#777" stroke-width=".7"/></svg>
<div class="a" style="left:508.5px;top:130px;width:9.5px;height:8.5px;background:#c8c8c8"></div>
<svg style="left:509.5px;top:131px" width="8" height="7" viewBox="0 0 8 7"><path d="M1.5 0v7M3.5 0v7M5.5 0v7M0 2h7M0 4.5h7" stroke="#777" stroke-width=".7"/></svg>
<div class="a" style="left:597px;top:130px;width:9.5px;height:8.5px;background:#c8c8c8"></div>
<svg style="left:598px;top:131px" width="8" height="7" viewBox="0 0 8 7"><path d="M1.5 0v7M3.5 0v7M5.5 0v7M0 2h7M0 4.5h7" stroke="#777" stroke-width=".7"/></svg>
<div class="a" style="left:665px;top:130px;width:9.5px;height:8.5px;background:#c8c8c8"></div>
<svg style="left:666px;top:131px" width="8" height="7" viewBox="0 0 8 7"><path d="M1.5 0v7M3.5 0v7M5.5 0v7M0 2h7M0 4.5h7" stroke="#777" stroke-width=".7"/></svg>
<svg style="left:0;top:0" width="750" height="150"><text x="51.0" y="137.3" font-size="8.2" text-anchor="middle" fill="#555" font-family="Liberation Sans">3</text><rect x="58.49" y="133.6" width="0.9" height="0.9" fill="#666"/><rect x="66.37" y="132" width="0.9" height="4" fill="#666"/><rect x="74.26" y="133.6" width="0.9" height="0.9" fill="#666"/><text x="82.6" y="137.3" font-size="8.2" text-anchor="middle" fill="#555" font-family="Liberation Sans">2</text><rect x="90.04" y="133.6" width="0.9" height="0.9" fill="#666"/><rect x="97.92" y="132" width="0.9" height="4" fill="#666"/><rect x="105.81" y="133.6" width="0.9" height="0.9" fill="#666"/><text x="114.1" y="137.3" font-size="8.2" text-anchor="middle" fill="#555" font-family="Liberation Sans">1</text><rect x="121.59" y="133.6" width="0.9" height="0.9" fill="#666"/><rect x="129.47" y="132" width="0.9" height="4" fill="#666"/><rect x="137.36" y="133.6" width="0.9" height="0.9" fill="#666"/><rect x="153.14" y="133.6" width="0.9" height="0.9" fill="#666"/><rect x="161.03" y="132" width="0.9" height="4" fill="#666"/><rect x="168.91" y="133.6" width="0.9" height="0.9" fill="#666"/><text x="177.2" y="137.3" font-size="8.2" text-anchor="middle" fill="#555" font-family="Liberation Sans">1</text><rect x="184.69" y="133.6" width="0.9" height="0.9" fill="#666"/><rect x="192.58" y="132" width="0.9" height="4" fill="#666"/><rect x="200.46" y="133.6" width="0.9" height="0.9" fill="#666"/><text x="208.8" y="137.3" font-size="8.2" text-anchor="middle" fill="#555" font-family="Liberation Sans">2</text><rect x="216.24" y="133.6" width="0.9" height="0.9" fill="#666"/><rect x="224.12" y="132" width="0.9" height="4" fill="#666"/><rect x="232.01" y="133.6" width="0.9" height="0.9" fill="#666"/><text x="240.4" y="137.3" font-size="8.2" text-anchor="middle" fill="#555" font-family="Liberation Sans">3</text><rect x="247.79" y="133.6" width="0.9" height="0.9" fill="#666"/><rect x="255.68" y="132" width="0.9" height="4" fill="#666"/><rect x="263.56" y="133.6" width="0.9" height="0.9" fill="#666"/><text x="271.9" y="137.3" font-size="8.2" text-anchor="middle" fill="#555" font-family="Liberation Sans">4</text><rect x="279.34" y="133.6" width="0.9" height="0.9" fill="#666"/><rect x="287.22" y="132" width="0.9" height="4" fill="#666"/><rect x="295.11" y="133.6" width="0.9" height="0.9" fill="#666"/><text x="303.4" y="137.3" font-size="8.2" text-anchor="middle" fill="#555" font-family="Liberation Sans">5</text><rect x="310.89" y="133.6" width="0.9" height="0.9" fill="#666"/><rect x="318.77" y="132" width="0.9" height="4" fill="#666"/><rect x="326.66" y="133.6" width="0.9" height="0.9" fill="#666"/><text x="335.0" y="137.3" font-size="8.2" text-anchor="middle" fill="#555" font-family="Liberation Sans">6</text><rect x="342.44" y="133.6" width="0.9" height="0.9" fill="#666"/><rect x="350.32" y="132" width="0.9" height="4" fill="#666"/><rect x="358.21" y="133.6" width="0.9" height="0.9" fill="#666"/><text x="366.5" y="137.3" font-size="8.2" text-anchor="middle" fill="#555" font-family="Liberation Sans">7</text><rect x="373.99" y="133.6" width="0.9" height="0.9" fill="#666"/><rect x="381.87" y="132" width="0.9" height="4" fill="#666"/><rect x="389.76" y="133.6" width="0.9" height="0.9" fill="#666"/><text x="398.1" y="137.3" font-size="8.2" text-anchor="middle" fill="#555" font-family="Liberation Sans">8</text><rect x="405.54" y="133.6" width="0.9" height="0.9" fill="#666"/><rect x="413.43" y="132" width="0.9" height="4" fill="#666"/><rect x="421.31" y="133.6" width="0.9" height="0.9" fill="#666"/><text x="429.6" y="137.3" font-size="8.2" text-anchor="middle" fill="#555" font-family="Liberation Sans">9</text><rect x="437.09" y="133.6" width="0.9" height="0.9" fill="#666"/><rect x="444.97" y="132" width="0.9" height="4" fill="#666"/><rect x="452.86" y="133.6" width="0.9" height="0.9" fill="#666"/><text x="461.2" y="137.3" font-size="8.2" text-anchor="middle" fill="#555" font-family="Liberation Sans">10</text><rect x="468.64" y="133.6" width="0.9" height="0.9" fill="#666"/><rect x="476.52" y="132" width="0.9" height="4" fill="#666"/><rect x="484.41" y="133.6" width="0.9" height="0.9" fill="#666"/><text x="492.8" y="137.3" font-size="8.2" text-anchor="middle" fill="#555" font-family="Liberation Sans">11</text><rect x="500.19" y="133.6" width="0.9" height="0.9" fill="#666"/><rect x="508.07" y="132" width="0.9" height="4" fill="#666"/><rect x="515.96" y="133.6" width="0.9" height="0.9" fill="#666"/><text x="524.3" y="137.3" font-size="8.2" text-anchor="middle" fill="#555" font-family="Liberation Sans">12</text><rect x="531.74" y="133.6" width="0.9" height="0.9" fill="#666"/><rect x="539.62" y="132" width="0.9" height="4" fill="#666"/><rect x="547.51" y="133.6" width="0.9" height="0.9" fill="#666"/><text x="555.9" y="137.3" font-size="8.2" text-anchor="middle" fill="#555" font-family="Liberation Sans">13</text><rect x="563.29" y="133.6" width="0.9" height="0.9" fill="#666"/><rect x="571.17" y="132" width="0.9" height="4" fill="#666"/><rect x="579.06" y="133.6" width="0.9" height="0.9" fill="#666"/><text x="587.4" y="137.3" font-size="8.2" text-anchor="middle" fill="#555" font-family="Liberation Sans">14</text><rect x="594.84" y="133.6" width="0.9" height="0.9" fill="#666"/><rect x="602.72" y="132" width="0.9" height="4" fill="#666"/><rect x="610.61" y="133.6" width="0.9" height="0.9" fill="#666"/><text x="619.0" y="137.3" font-size="8.2" text-anchor="middle" fill="#555" font-family="Liberation Sans">15</text><rect x="626.39" y="133.6" width="0.9" height="0.9" fill="#666"/><rect x="634.27" y="132" width="0.9" height="4" fill="#666"/><rect x="642.16" y="133.6" width="0.9" height="0.9" fill="#666"/><text x="650.5" y="137.3" font-size="8.2" text-anchor="middle" fill="#555" font-family="Liberation Sans">16</text><rect x="657.94" y="133.6" width="0.9" height="0.9" fill="#666"/><rect x="665.82" y="132" width="0.9" height="4" fill="#666"/><rect x="673.71" y="133.6" width="0.9" height="0.9" fill="#666"/><text x="682.0" y="137.3" font-size="8.2" text-anchor="middle" fill="#555" font-family="Liberation Sans">17</text><rect x="689.49" y="133.6" width="0.9" height="0.9" fill="#666"/><rect x="697.37" y="132" width="0.9" height="4" fill="#666"/></svg>
<svg style="left:329.5px;top:126px" width="9" height="19" viewBox="0 0 9 19"><path d="M0.5 0.5h8L4.5 5z" fill="#fff" stroke="#888"/><path d="M4.5 5L0.5 9.5h8z" fill="#fff" stroke="#888"/><rect x="0.5" y="10" width="8" height="4.5" fill="#fff" stroke="#888"/></svg>
<svg style="left:504.5px;top:134px" width="9" height="6" viewBox="0 0 9 6"><path d="M4.5 0.5L0.5 5h8z" fill="#fff" stroke="#888"/></svg>
<div class="a" style="left:5px;top:146px;width:9px;height:667px;background:#fff"></div>
<div class="a" style="left:5px;top:146px;width:9px;height:48.4px;background:#c8c8c8"></div>
<svg style="left:0;top:0" width="60" height="833"><text transform="translate(12.5,162.2) rotate(-90)" font-size="8.2" text-anchor="middle" fill="#555" font-family="Liberation Sans">1</text><rect x="9" y="169.69" width="0.9" height="0.9" fill="#666"/><rect x="7.5" y="177.58" width="4" height="0.9" fill="#666"/><rect x="9" y="185.46" width="0.9" height="0.9" fill="#666"/><rect x="9" y="201.24" width="0.9" height="0.9" fill="#666"/><rect x="7.5" y="209.13" width="4" height="0.9" fill="#666"/><rect x="9" y="217.01" width="0.9" height="0.9" fill="#666"/><text transform="translate(12.5,225.4) rotate(-90)" font-size="8.2" text-anchor="middle" fill="#555" font-family="Liberation Sans">1</text><rect x="9" y="232.79" width="0.9" height="0.9" fill="#666"/><rect x="7.5" y="240.68" width="4" height="0.9" fill="#666"/><rect x="9" y="248.56" width="0.9" height="0.9" fill="#666"/><text transform="translate(12.5,256.9) rotate(-90)" font-size="8.2" text-anchor="middle" fill="#555" font-family="Liberation Sans">2</text><rect x="9" y="264.34" width="0.9" height="0.9" fill="#666"/><rect x="7.5" y="272.23" width="4" height="0.9" fill="#666"/><rect x="9" y="280.11" width="0.9" height="0.9" fill="#666"/><text transform="translate(12.5,288.5) rotate(-90)" font-size="8.2" text-anchor="middle" fill="#555" font-family="Liberation Sans">3</text><rect x="9" y="295.89" width="0.9" height="0.9" fill="#666"/><rect x="7.5" y="303.78" width="4" height="0.9" fill="#666"/><rect x="9" y="311.66" width="0.9" height="0.9" fill="#666"/><text transform="translate(12.5,320.0) rotate(-90)" font-size="8.2" text-anchor="middle" fill="#555" font-family="Liberation Sans">4</text><rect x="9" y="327.44" width="0.9" height="0.9" fill="#666"/><rect x="7.5" y="335.32" width="4" height="0.9" fill="#666"/><rect x="9" y="343.21" width="0.9" height="0.9" fill="#666"/><text transform="translate(12.5,351.6) rotate(-90)" font-size="8.2" text-anchor="middle" fill="#555" font-family="Liberation Sans">5</text><rect x="9" y="358.99" width="0.9" height="0.9" fill="#666"/><rect x="7.5" y="366.88" width="4" height="0.9" fill="#666"/><rect x="9" y="374.76" width="0.9" height="0.9" fill="#666"/><text transform="translate(12.5,383.1) rotate(-90)" font-size="8.2" text-anchor="middle" fill="#555" font-family="Liberation Sans">6</text><rect x="9" y="390.54" width="0.9" height="0.9" fill="#666"/><rect x="7.5" y="398.43" width="4" height="0.9" fill="#666"/><rect x="9" y="406.31" width="0.9" height="0.9" fill="#666"/><text transform="translate(12.5,414.6) rotate(-90)" font-size="8.2" text-anchor="middle" fill="#555" font-family="Liberation Sans">7</text><rect x="9" y="422.09" width="0.9" height="0.9" fill="#666"/><rect x="7.5" y="429.98" width="4" height="0.9" fill="#666"/><rect x="9" y="437.86" width="0.9" height="0.9" fill="#666"/><text transform="translate(12.5,446.2) rotate(-90)" font-size="8.2" text-anchor="middle" fill="#555" font-family="Liberation Sans">8</text><rect x="9" y="453.64" width="0.9" height="0.9" fill="#666"/><rect x="7.5" y="461.53" width="4" height="0.9" fill="#666"/><rect x="9" y="469.41" width="0.9" height="0.9" fill="#666"/><text transform="translate(12.5,477.8) rotate(-90)" font-size="8.2" text-anchor="middle" fill="#555" font-family="Liberation Sans">9</text><rect x="9" y="485.19" width="0.9" height="0.9" fill="#666"/><rect x="7.5" y="493.08" width="4" height="0.9" fill="#666"/><rect x="9" y="500.96" width="0.9" height="0.9" fill="#666"/><text transform="translate(12.5,509.3) rotate(-90)" font-size="8.2" text-anchor="middle" fill="#555" font-family="Liberation Sans">10</text><rect x="9" y="516.74" width="0.9" height="0.9" fill="#666"/><rect x="7.5" y="524.62" width="4" height="0.9" fill="#666"/><rect x="9" y="532.51" width="0.9" height="0.9" fill="#666"/><text transform="translate(12.5,540.9) rotate(-90)" font-size="8.2" text-anchor="middle" fill="#555" font-family="Liberation Sans">11</text><rect x="9" y="548.29" width="0.9" height="0.9" fill="#666"/><rect x="7.5" y="556.17" width="4" height="0.9" fill="#666"/><rect x="9" y="564.06" width="0.9" height="0.9" fill="#666"/><text transform="translate(12.5,572.4) rotate(-90)" font-size="8.2" text-anchor="middle" fill="#555" font-family="Liberation Sans">12</text><rect x="9" y="579.84" width="0.9" height="0.9" fill="#666"/><rect x="7.5" y="587.72" width="4" height="0.9" fill="#666"/><rect x="9" y="595.61" width="0.9" height="0.9" fill="#666"/><text transform="translate(12.5,604.0) rotate(-90)" font-size="8.2" text-anchor="middle" fill="#555" font-family="Liberation Sans">13</text><rect x="9" y="611.39" width="0.9" height="0.9" fill="#666"/><rect x="7.5" y="619.27" width="4" height="0.9" fill="#666"/><rect x="9" y="627.16" width="0.9" height="0.9" fill="#666"/><text transform="translate(12.5,635.5) rotate(-90)" font-size="8.2" text-anchor="middle" fill="#555" font-family="Liberation Sans">14</text><rect x="9" y="642.94" width="0.9" height="0.9" fill="#666"/><rect x="7.5" y="650.83" width="4" height="0.9" fill="#666"/><rect x="9" y="658.71" width="0.9" height="0.9" fill="#666"/><text transform="translate(12.5,667.0) rotate(-90)" font-size="8.2" text-anchor="middle" fill="#555" font-family="Liberation Sans">15</text><rect x="9" y="674.49" width="0.9" height="0.9" fill="#666"/><rect x="7.5" y="682.38" width="4" height="0.9" fill="#666"/><rect x="9" y="690.26" width="0.9" height="0.9" fill="#666"/><text transform="translate(12.5,698.6) rotate(-90)" font-size="8.2" text-anchor="middle" fill="#555" font-family="Liberation Sans">16</text><rect x="9" y="706.04" width="0.9" height="0.9" fill="#666"/><rect x="7.5" y="713.92" width="4" height="0.9" fill="#666"/><rect x="9" y="721.81" width="0.9" height="0.9" fill="#666"/><text transform="translate(12.5,730.2) rotate(-90)" font-size="8.2" text-anchor="middle" fill="#555" font-family="Liberation Sans">17</text><rect x="9" y="737.59" width="0.9" height="0.9" fill="#666"/><rect x="7.5" y="745.47" width="4" height="0.9" fill="#666"/><rect x="9" y="753.36" width="0.9" height="0.9" fill="#666"/><text transform="translate(12.5,761.7) rotate(-90)" font-size="8.2" text-anchor="middle" fill="#555" font-family="Liberation Sans">18</text><rect x="9" y="769.14" width="0.9" height="0.9" fill="#666"/><rect x="7.5" y="777.03" width="4" height="0.9" fill="#666"/><rect x="9" y="784.91" width="0.9" height="0.9" fill="#666"/><text transform="translate(12.5,793.2) rotate(-90)" font-size="8.2" text-anchor="middle" fill="#555" font-family="Liberation Sans">19</text><rect x="9" y="800.69" width="0.9" height="0.9" fill="#666"/><rect x="7.5" y="808.58" width="4" height="0.9" fill="#666"/></svg>
<div class="a" style="left:5px;top:290.6px;width:9px;height:5.5px;background:#c8c8c8"></div>
<div class="a" style="left:5px;top:731px;width:9px;height:5.5px;background:#c8c8c8"></div>
<div class="a" style="left:47.7px;top:145.8px;width:660px;height:668px;background:#fff"></div>
<div class="a" style="left:140px;top:195px;width:533px;height:1px;background:#333"></div>
<div class="a" style="left:140px;top:292px;width:533px;height:1px;background:#888"></div>
<div class="a" style="left:140px;top:731.5px;width:533px;height:1px;background:#888"></div>
<div class="a" style="left:140px;top:195.5px;width:1px;height:618px;background:#333"></div>
<div class="a" style="left:224px;top:195.5px;width:1px;height:618px;background:#444"></div>
<div class="a" style="left:329px;top:195.5px;width:1px;height:618px;background:#333"></div>
<div class="a" style="left:510px;top:195.5px;width:1px;height:618px;background:#333"></div>
<div class="a" style="left:598px;top:195.5px;width:1px;height:618px;background:#888"></div>
<div class="a" style="left:672px;top:195.5px;width:1px;height:618px;background:#777"></div>
<div class="t" style="left:141.5px;top:197.4px;width:83px;text-align:center;font-size:12.2px;color:#111;font-family:Liberation Serif,serif">Сабақтың</div>
<div class="t" style="left:141.5px;top:213.5px;width:83px;text-align:center;font-size:12.2px;color:#111;font-family:Liberation Serif,serif">ортасы</div>
<div class="t" style="left:141.5px;top:229.6px;width:83px;text-align:center;font-size:12.2px;color:#111;font-family:Liberation Serif,serif">Мағынаны</div>
<div class="t" style="left:141.5px;top:245.7px;width:83px;text-align:center;font-size:12.2px;color:#111;font-family:Liberation Serif,serif">ашу.</div>
<div class="t" style="left:141.5px;top:261.8px;width:83px;text-align:center;font-size:12.2px;color:#111;font-family:Liberation Serif,serif">26 мин.</div>
<div class="t" style="left:232.25px;top:197.4px;font-size:12.2px;color:#111;font-family:Liberation Serif,serif">Оқулықтағы</div>
<div class="t" style="left:232.25px;top:213.5px;font-size:12.2px;color:#111;font-family:Liberation Serif,serif">жаңа сабақтың</div>
<div class="t" style="left:232.25px;top:229.6px;font-size:12.2px;color:#111;font-family:Liberation Serif,serif">мәтінін оқуға</div>
<div class="t" style="left:232.25px;top:245.7px;font-size:12.2px;color:#111;font-family:Liberation Serif,serif">тапсырма береді</div>
<div class="t" style="left:336.1px;top:197.4px;font-size:12.2px;color:#111;font-family:Liberation Serif,serif">Оқулықты оқып танысып</div>
<div class="t" style="left:336.1px;top:213.5px;font-size:12.2px;color:#111;font-family:Liberation Serif,serif">шығады. Тірек сөздермен</div>
<div class="t" style="left:336.1px;top:229.6px;font-size:12.2px;color:#111;font-family:Liberation Serif,serif">танысып, өз дәптерлеріне</div>
<div class="t" style="left:336.1px;top:245.7px;font-size:12.2px;color:#111;font-family:Liberation Serif,serif">жазып алады.</div>
<div class="t" style="left:517px;top:197.4px;font-size:12.2px;color:#111;font-family:Liberation Serif,serif">Оқушыларды</div>
<div class="t" style="left:517px;top:213.5px;font-size:12.2px;color:#111;font-family:Liberation Serif,serif">ынталандыру</div>
<div class="t" style="left:517px;top:229.6px;font-size:12.2px;color:#111;font-family:Liberation Serif,serif">мақсатында</div>
<div class="t" style="left:517px;top:245.7px;font-size:12.2px;color:#111;font-family:Liberation Serif,serif">«мадақтау»</div>
<div class="t" style="left:517px;top:261.8px;font-size:12.2px;color:#111;font-family:Liberation Serif,serif">арқылы</div>
<div class="t" style="left:517px;top:277.9px;font-size:12.2px;color:#111;font-family:Liberation Serif,serif">бағалау</div>
<div class="t" style="left:605.2px;top:197.4px;font-size:12.2px;color:#111;font-family:Liberation Serif,serif">2-сынып</div>
<div class="t" style="left:605.2px;top:213.5px;font-size:12.2px;color:#111;font-family:Liberation Serif,serif">оқулығы</div>
<div class="t" style="left:232.25px;top:293.9px;font-size:12.2px;color:#111;font-family:Liberation Serif,serif">Тапсырмалар</div>
<div class="t" style="left:232.25px;top:310.0px;font-size:12.2px;color:#111;font-family:Liberation Serif,serif">айдарындағы 1-</div>
<div class="t" style="left:232.25px;top:326.1px;font-size:12.2px;color:#111;font-family:Liberation Serif,serif">тапсырманы</div>
<div class="t" style="left:232.25px;top:342.2px;font-size:12.2px;color:#111;font-family:Liberation Serif,serif">орындатады,</div>
<div class="t" style="left:232.25px;top:358.3px;font-size:12.2px;color:#111;font-family:Liberation Serif,serif">бақылайды,</div>
<div class="t" style="left:232.25px;top:374.4px;font-size:12.2px;color:#111;font-family:Liberation Serif,serif">мысал, үлгі</div>
<div class="t" style="left:232.25px;top:390.5px;font-size:12.2px;color:#111;font-family:Liberation Serif,serif">көрсетеді.</div>
<div class="t" style="left:336.1px;top:293.9px;font-size:12.2px;color:#111;font-family:Liberation Serif,serif"><b><i>1-тапсырма</i></b></div>
<div class="t" style="left:336.1px;top:310.0px;font-size:12.2px;color:#111;font-family:Liberation Serif,serif">1.Стақандардағы</div>
<div class="t" style="left:336.1px;top:326.1px;font-size:12.2px;color:#111;font-family:Liberation Serif,serif">сұйықтықтарды&nbsp; салыстыр.</div>
<div class="t" style="left:336.1px;top:342.2px;font-size:12.2px;color:#111;font-family:Liberation Serif,serif">Бірінші стақан арқылы басқа</div>
<div class="t" style="left:336.1px;top:358.3px;font-size:12.2px;color:#111;font-family:Liberation Serif,serif">заттарды көруге бола ма?</div>
<div class="t" style="left:336.1px;top:374.4px;font-size:12.2px;color:#111;font-family:Liberation Serif,serif">Екінші стақан арқылы ше?</div>
<div class="t" style="left:336.1px;top:390.5px;font-size:12.2px;color:#111;font-family:Liberation Serif,serif">Неліктен?</div>
<div class="t" style="left:336.1px;top:524.0px;font-size:12.2px;color:#111;font-family:Liberation Serif,serif"><b><i>2-тапсырма:</i></b></div>
<div class="t" style="left:336.1px;top:540.1px;font-size:12.2px;color:#111;font-family:Liberation Serif,serif">Мына ыдыстардың қайсысын</div>
<div class="t" style="left:336.1px;top:556.2px;font-size:12.2px;color:#111;font-family:Liberation Serif,serif">мөлдір деп айтуға болады?</div>
<div class="t" style="left:336.1px;top:572.3px;font-size:12.2px;color:#111;font-family:Liberation Serif,serif">Неліктен? Қай ыдыстар мөлдір</div>
<div class="t" style="left:336.1px;top:588.4px;font-size:12.2px;color:#111;font-family:Liberation Serif,serif">емес?</div>
<div class="t" style="left:517px;top:293.9px;font-size:12.2px;color:#111;font-family:Liberation Serif,serif">Дескриптор:</div>
<div class="t" style="left:517px;top:310.0px;font-size:12.2px;color:#111;font-family:Liberation Serif,serif">Жалпы - 3</div>
<div class="t" style="left:517px;top:326.1px;font-size:12.2px;color:#111;font-family:Liberation Serif,serif">балл</div>
<div class="t" style="left:517px;top:342.2px;font-size:12.2px;color:#111;font-family:Liberation Serif,serif">1.Фотосуретте</div>
<div class="t" style="left:517px;top:358.3px;font-size:12.2px;color:#111;font-family:Liberation Serif,serif">рді</div>
<div class="t" style="left:517px;top:374.4px;font-size:12.2px;color:#111;font-family:Liberation Serif,serif">салыстырады</div>
<div class="t" style="left:517px;top:390.5px;font-size:12.2px;color:#111;font-family:Liberation Serif,serif">Олардың</div>
<div class="t" style="left:517px;top:406.6px;font-size:12.2px;color:#111;font-family:Liberation Serif,serif">айырмашылы</div>
<div class="t" style="left:517px;top:422.7px;font-size:12.2px;color:#111;font-family:Liberation Serif,serif">ғын</div>
<div class="t" style="left:517px;top:438.8px;font-size:12.2px;color:#111;font-family:Liberation Serif,serif">түсіндіреді</div>
<div class="t" style="left:517px;top:454.9px;font-size:12.2px;color:#111;font-family:Liberation Serif,serif">2. Суреттерді</div>
<div class="t" style="left:517px;top:471.0px;font-size:12.2px;color:#111;font-family:Liberation Serif,serif">салыстырады</div>
<div class="t" style="left:517px;top:487.1px;font-size:12.2px;color:#111;font-family:Liberation Serif,serif">Түсіндіреді</div>
<div class="t" style="left:605.2px;top:293.9px;font-size:12.2px;color:#111;font-family:Liberation Serif,serif">ДК экраны</div>
<div class="t" style="left:605.2px;top:310.0px;font-size:12.2px;color:#111;font-family:Liberation Serif,serif">2-сынып</div>
<div class="t" style="left:605.2px;top:326.1px;font-size:12.2px;color:#111;font-family:Liberation Serif,serif">оқулығы.</div>
<div class="t" style="left:605.2px;top:342.2px;font-size:12.2px;color:#111;font-family:Liberation Serif,serif">Жұмыс</div>
<div class="t" style="left:605.2px;top:358.3px;font-size:12.2px;color:#111;font-family:Liberation Serif,serif">дәптерлері.</div>
<div class="t" style="left:232.25px;top:733.5px;font-size:12.2px;color:#111;font-family:Liberation Serif,serif">Тапсырмалар</div>
<div class="t" style="left:232.25px;top:749.6px;font-size:12.2px;color:#111;font-family:Liberation Serif,serif">айдарындағы 2-</div>
<div class="t" style="left:232.25px;top:765.7px;font-size:12.2px;color:#111;font-family:Liberation Serif,serif">тапсырманы</div>
<div class="t" style="left:232.25px;top:781.8px;font-size:12.2px;color:#111;font-family:Liberation Serif,serif">орындатады,</div>
<div class="t" style="left:232.25px;top:797.9px;font-size:12.2px;color:#111;font-family:Liberation Serif,serif">бақылайды,</div>
<div class="t" style="left:336.1px;top:733.5px;font-size:12.2px;color:#111;font-family:Liberation Serif,serif"><b><i>3-тапсырма:</i></b> Мұз қалай&nbsp; пайда</div>
<div class="t" style="left:336.1px;top:749.6px;font-size:12.2px;color:#111;font-family:Liberation Serif,serif">болатынын?&nbsp; Су қалай буға</div>
<div class="t" style="left:336.1px;top:765.7px;font-size:12.2px;color:#111;font-family:Liberation Serif,serif">айналатынын? Бу қалай&nbsp; суға</div>
<div class="t" style="left:336.1px;top:781.8px;font-size:12.2px;color:#111;font-family:Liberation Serif,serif">айналатынын зертте..</div>
<div class="t" style="left:517px;top:733.5px;font-size:12.2px;color:#111;font-family:Liberation Serif,serif">Дескриптор:</div>
<div class="t" style="left:517px;top:749.6px;font-size:12.2px;color:#111;font-family:Liberation Serif,serif">Жалпы - 3</div>
<div class="t" style="left:517px;top:765.7px;font-size:12.2px;color:#111;font-family:Liberation Serif,serif">балл</div>
<div class="t" style="left:517px;top:781.8px;font-size:12.2px;color:#111;font-family:Liberation Serif,serif">1.Тапсырма</div>
<div class="t" style="left:517px;top:797.9px;font-size:12.2px;color:#111;font-family:Liberation Serif,serif">бойынша</div>
<div class="t" style="left:605.2px;top:733.5px;font-size:12.2px;color:#111;font-family:Liberation Serif,serif">ДК экраны</div>
<div class="t" style="left:605.2px;top:749.6px;font-size:12.2px;color:#111;font-family:Liberation Serif,serif">2-сынып</div>
<div class="t" style="left:605.2px;top:765.7px;font-size:12.2px;color:#111;font-family:Liberation Serif,serif">оқулығы.</div>
<div class="t" style="left:605.2px;top:781.8px;font-size:12.2px;color:#111;font-family:Liberation Serif,serif">Жұмыс</div>
<div class="t" style="left:605.2px;top:797.9px;font-size:12.2px;color:#111;font-family:Liberation Serif,serif">дәптерлері.</div>
<svg style="left:336px;top:406px" width="168" height="113" viewBox="0 0 168 113"><defs><linearGradient id="gbg" x1="0" y1="0" x2="1" y2="0"><stop offset="0" stop-color="#eff6f4"/><stop offset="1" stop-color="#f2f8f9"/></linearGradient></defs><rect width="168" height="113" fill="url(#gbg)"/><g transform="translate(26,18)"><defs><clipPath id="gc1"><path d="M0 6 Q28.0 -1 56 6 L53 32.04 Q53 35.6 50 39.160000000000004 L48 82 Q28.0 90 8 82 L6 39.160000000000004 Q3 35.6 3 32.04 Z"/></clipPath></defs><path d="M0 6 Q28.0 -1 56 6 L53 32.04 Q53 35.6 50 39.160000000000004 L48 82 Q28.0 90 8 82 L6 39.160000000000004 Q3 35.6 3 32.04 Z" fill="#f6fafb" fill-opacity=".9"/><g clip-path="url(#gc1)"><rect x="0" y="29" width="56" height="62" fill="#f1e9cf"/><rect x="0" y="39.160000000000004" width="56" height="51.839999999999996" fill="#ecdcb4"/><rect x="0" y="29" width="56" height="3" fill="#fff" opacity=".35"/></g><path d="M1 7 Q28.0 15 55 7" fill="none" stroke="#8a9094" stroke-width=".9" stroke-dasharray="3 2"/><path d="M15.120000000000001 42.160000000000004 L16.8 81 M40.879999999999995 42.160000000000004 L39.199999999999996 81 M6 39.160000000000004 Q28.0 33.160000000000004 50 39.160000000000004" fill="none" stroke="#8a9094" stroke-width=".9" stroke-dasharray="3 2"/><path d="M0 6 Q28.0 -1 56 6 L53 32.04 Q53 35.6 50 39.160000000000004 L48 82 Q28.0 90 8 82 L6 39.160000000000004 Q3 35.6 3 32.04 Z" fill="none" stroke="#8a9094" stroke-width="1"/></g><g transform="translate(103,18)"><defs><clipPath id="gc2"><path d="M0 6 Q28.0 -1 56 6 L53 32.04 Q53 35.6 50 39.160000000000004 L48 82 Q28.0 90 8 82 L6 39.160000000000004 Q3 35.6 3 32.04 Z"/></clipPath></defs><path d="M0 6 Q28.0 -1 56 6 L53 32.04 Q53 35.6 50 39.160000000000004 L48 82 Q28.0 90 8 82 L6 39.160000000000004 Q3 35.6 3 32.04 Z" fill="#f6fafb" fill-opacity=".9"/><g clip-path="url(#gc2)"><rect x="0" y="25" width="56" height="66" fill="#b5dcf2"/><rect x="0" y="39.160000000000004" width="56" height="51.839999999999996" fill="#a8d4ee"/><rect x="0" y="25" width="56" height="3" fill="#fff" opacity=".35"/></g><path d="M1 7 Q28.0 15 55 7" fill="none" stroke="#8a9094" stroke-width=".9" stroke-dasharray="3 2"/><path d="M15.120000000000001 42.160000000000004 L16.8 81 M40.879999999999995 42.160000000000004 L39.199999999999996 81 M6 39.160000000000004 Q28.0 33.160000000000004 50 39.160000000000004" fill="none" stroke="#8a9094" stroke-width=".9" stroke-dasharray="3 2"/><path d="M0 6 Q28.0 -1 56 6 L53 32.04 Q53 35.6 50 39.160000000000004 L48 82 Q28.0 90 8 82 L6 39.160000000000004 Q3 35.6 3 32.04 Z" fill="none" stroke="#8a9094" stroke-width="1"/></g><circle cx="17" cy="15" r="7" fill="#c21f2d"/><text x="17" y="19" font-size="10" text-anchor="middle" fill="#fff" font-weight="bold" font-family="Liberation Sans">1</text><circle cx="96" cy="15" r="7" fill="#c21f2d"/><text x="96" y="19" font-size="10" text-anchor="middle" fill="#fff" font-weight="bold" font-family="Liberation Sans">2</text></svg>
<div class="a" style="left:336px;top:797px;width:173px;height:17px;background:#fbe6d8"></div>
<svg style="left:383px;top:796px" width="40" height="18" viewBox="0 0 40 18"><path d="M4 18 Q2 8 8 4 Q14 -1 22 2 Q32 1 36 8 Q40 14 37 18z" fill="#f0dc78"/><path d="M10 18 Q12 10 20 10 Q28 10 30 18z" fill="#f4c8a8"/><path d="M8 6 Q12 3 16 5 M24 4 Q30 4 33 9" stroke="#d8b040" fill="none"/></svg>
<div class="a" style="left:0px;top:813px;width:749px;height:1px;background:#d0d0d0"></div>
<div class="a" style="left:0px;top:814px;width:749px;height:18px;background:#f1f1f1"></div>
<div class="t" style="left:7px;top:818px;color:#444;font-size:9.6px;font-size:9.4px">Страница 3 из 44</div>
<div class="t" style="left:98.5px;top:818px;color:#444;font-size:9.6px;font-size:9.05px">Число слов: 7005</div>
<svg style="left:189.5px;top:817px" width="13" height="12" viewBox="0 0 13 12"><path d="M0.5 0.5h5v11h-5zM5.5 0.5h2" fill="none" stroke="#666"/><path d="M8 3l4 5M12 3l-4 5M7 11h5" stroke="#666"/></svg>
<div class="t" style="left:215.8px;top:818px;color:#444;font-size:9.6px;font-size:9.5px">казахский</div>
<svg style="left:505px;top:817px" width="12" height="11" viewBox="0 0 12 11"><path d="M0.5 0.5h5l.5 1 .5-1h5v10h-5l-.5.5-.5-.5h-5z" fill="none" stroke="#777"/><path d="M6 1v9.5M1.5 3h3M1.5 5h3M1.5 7h3M7.5 3h3M7.5 5h3M7.5 7h3" stroke="#888" stroke-width=".8"/></svg>
<div class="a" style="left:527.3px;top:814px;width:31px;height:18px;background:#c8c8c8"></div>
<svg style="left:537px;top:817px" width="12" height="12" viewBox="0 0 12 12"><rect x="0.5" y="0.5" width="11" height="11" fill="none" stroke="#777"/><path d="M2.5 3h7M2.5 5h7M2.5 7h7M2.5 9h7" stroke="#777"/></svg>
<svg style="left:568px;top:817px" width="13" height="12" viewBox="0 0 13 12"><path d="M0.5 0.5h10v8h-10z" fill="none" stroke="#888"/><path d="M2 3h6M2 5h5" stroke="#999"/><circle cx="10" cy="9" r="2.5" fill="#888"/></svg>
<div class="a" style="left:596px;top:822.5px;width:4px;height:1.3px;background:#444"></div>
<div class="a" style="left:603px;top:822.5px;width:83px;height:1px;background:#c6c6c6"></div>
<div class="a" style="left:643px;top:818.5px;width:2.5px;height:9px;background:#555"></div>
<div class="a" style="left:691.5px;top:822.3px;width:7px;height:1.3px;background:#444"></div>
<div class="a" style="left:694.4px;top:819.4px;width:1.3px;height:7px;background:#444"></div>
<div class="t" style="left:709px;top:818px;color:#444;font-size:9.6px;font-size:8.6px">100%</div>
</div>
<div class="a" style="left:34px;top:0px;width:1px;height:833px;background:#2b579a"></div>
<div class="a" style="left:782px;top:0px;width:1px;height:833px;background:#2b579a"></div>
<div class="a" style="left:34px;top:832px;width:749px;height:1px;background:#2b579a"></div>
<div class="a" style="left:839px;top:29px;width:709px;height:808px;overflow:hidden;background:#525659">
<div class="a" style="left:0px;top:0px;width:709px;height:34px;background:#dee1e6"></div>
<div class="a" style="left:7px;top:7px;width:200px;height:28px;background:#fff;border-radius:7px 7px 0 0"></div>
<svg style="left:-1px;top:26px" width="8" height="8" viewBox="0 0 8 8"><path d="M8 0v8H0A8 8 0 0 0 8 0z" fill="#fff"/></svg>
<svg style="left:207px;top:26px" width="8" height="8" viewBox="0 0 8 8"><path d="M0 0v8H8A8 8 0 0 1 0 0z" fill="#fff"/></svg>
<svg style="left:17.5px;top:15px" width="12" height="12" viewBox="0 0 12 12"><circle cx="6" cy="6" r="5.6" fill="#5f6368"/><path d="M3 2.2c1 .8 1.6 1.6 1.2 2.6-.4.8-1.6.6-1.8 1.8-.1.8.6 1.4.8 2.4M6.5 11c0-1.2.6-2 1.6-2.4 1-.4 1.4-1.4 1-2.2-.4-.6-1.4-.6-1.8-1.4-.4-.8.2-1.8.8-2.4" fill="none" stroke="#fff" stroke-width="1.3"/></svg>
<div class="t" style="left:36.700000000000045px;top:15.5px;width:148px;overflow:hidden;font-size:10.6px;color:#3c4043;-webkit-mask-image:linear-gradient(90deg,#000 88%,transparent)">Жаратылыстану 2-сынып кітап.pdf</div>
<svg style="left:189.5px;top:17.5px" width="8" height="8" viewBox="0 0 8 8"><path d="M1 1l6 6M7 1L1 7" stroke="#5f6368" stroke-width="1.5"/></svg>
<svg style="left:220px;top:16px" width="10" height="10" viewBox="0 0 10 10"><path d="M5 0v10M0 5h10" stroke="#5f6368" stroke-width="1.6"/></svg>
<div class="a" style="left:607px;top:12px;width:10px;height:1px;background:#777"></div>
<svg style="left:646px;top:8px" width="10" height="9" viewBox="0 0 10 9"><rect x="0.5" y="0.5" width="9" height="8" fill="none" stroke="#666" stroke-width="1"/></svg>
<svg style="left:684.5px;top:7.5px" width="10" height="10" viewBox="0 0 10 10"><path d="M0.5 0.5l9 9M9.5 0.5l-9 9" stroke="#666" stroke-width="1"/></svg>
<div class="a" style="left:0px;top:34px;width:709px;height:32px;background:#fff"></div>
<svg style="left:12.5px;top:44.5px" width="12" height="12" viewBox="0 0 12 12"><path d="M11.5 6H1.5M6 1.5L1.5 6 6 10.5" fill="none" stroke="#b8b9bb" stroke-width="1.5"/></svg>
<svg style="left:39px;top:44.5px" width="12" height="12" viewBox="0 0 12 12"><path d="M0.5 6h10M6 1.5L10.5 6 6 10.5" fill="none" stroke="#b8b9bb" stroke-width="1.5"/></svg>
<svg style="left:65.5px;top:44.5px" width="13" height="12" viewBox="0 0 13 12"><path d="M10.6 3.5A5 5 0 1 0 11 8" fill="none" stroke="#444" stroke-width="1.6"/><path d="M11.8 0.5v4.6H7.2z" fill="#444"/></svg>
<div class="a" style="left:90.3px;top:38.3px;width:556px;height:23.4px;background:#f1f3f4;border-radius:12px"></div>
<svg style="left:99px;top:44.5px" width="12" height="12" viewBox="0 0 12 12"><circle cx="6" cy="6" r="5.2" fill="none" stroke="#444" stroke-width="1.3"/><rect x="5.3" y="5" width="1.5" height="4" fill="#444"/><rect x="5.3" y="2.6" width="1.5" height="1.5" fill="#444"/></svg>
<div class="t" style="left:118.5px;top:44px;font-size:11.4px;color:#5f6368">Файл</div>
<div class="a" style="left:152px;top:45px;width:1px;height:11px;background:#9aa0a6"></div>
<div class="t" style="left:160.2px;top:43.5px;font-size:11.37px;color:#202124">C:/Users/ASUS/Desktop/ҚМЖ/Жаратылыстану/Жаратылыстану%202-сынып%...</div>
<svg style="left:597px;top:44.5px" width="13" height="12" viewBox="0 0 13 12"><circle cx="5" cy="5" r="4.2" fill="none" stroke="#5f6368" stroke-width="1.3"/><path d="M8 8l4 4" stroke="#5f6368" stroke-width="1.5"/><path d="M3 5h4" stroke="#5f6368" stroke-width="1"/></svg>
<svg style="left:624.5px;top:44.5px" width="12" height="12" viewBox="0 0 12 12"><path d="M6 0.8l1.5 3.6 3.9.3-3 2.5.9 3.8L6 9 2.7 11l.9-3.8-3-2.5 3.9-.3z" fill="none" stroke="#5f6368" stroke-width="1.2" stroke-linejoin="round"/></svg>
<div class="a" style="left:653.5px;top:41px;width:18.5px;height:18.5px;background:#1155a8;border-radius:50%"></div>
<div class="t" style="left:659px;top:44.5px;font-size:10.5px;color:#fff">У</div>
<div class="a" style="left:689.6px;top:45.5px;width:2px;height:2px;background:#5f6368;border-radius:50%"></div>
<div class="a" style="left:689.6px;top:50.3px;width:2px;height:2px;background:#5f6368;border-radius:50%"></div>
<div class="a" style="left:689.6px;top:55px;width:2px;height:2px;background:#5f6368;border-radius:50%"></div>
<div class="a" style="left:0px;top:66px;width:709px;height:47px;background:#323639"></div>
<div class="a" style="left:21px;top:83.5px;width:14.5px;height:1.8px;background:#fff"></div>
<div class="a" style="left:21px;top:88.3px;width:14.5px;height:1.8px;background:#fff"></div>
<div class="a" style="left:21px;top:93px;width:14.5px;height:1.8px;background:#fff"></div>
<div class="t" style="left:56.5px;top:83px;font-size:11px;font-weight:bold;color:#fff">Жаратылыстану 2-сынып ...</div>
<div class="a" style="left:233px;top:80.3px;width:19.3px;height:16.2px;background:#191b1c"></div>
<div class="t" style="left:236.5px;top:83.5px;font-size:11px;color:#fff;-webkit-text-stroke:.35px #fff">70</div>
<div class="t" style="left:256px;top:83px;font-size:11px;color:#fff;-webkit-text-stroke:.35px #fff">/ 91</div>
<div class="a" style="left:293.5px;top:83px;width:1px;height:12px;background:#5f6368"></div>
<div class="a" style="left:307px;top:89.5px;width:10px;height:1.6px;background:#fff"></div>
<div class="a" style="left:331px;top:80.3px;width:37px;height:16.2px;background:#191b1c"></div>
<div class="t" style="left:339.5px;top:83.5px;font-size:10.6px;color:#fff;-webkit-text-stroke:.35px #fff">79%</div>
<div class="a" style="left:381.7px;top:89.6px;width:10px;height:1.6px;background:#fff"></div>
<div class="a" style="left:386px;top:85.2px;width:1.6px;height:10px;background:#fff"></div>
<div class="a" style="left:405.5px;top:83px;width:1px;height:12px;background:#5f6368"></div>
<svg style="left:423px;top:83.5px" width="16" height="12.5" viewBox="0 0 16 12.5"><rect x="0.8" y="0.8" width="14.4" height="10.9" fill="none" stroke="#fff" stroke-width="1.5"/><path d="M8 3l-2 2h4zM8 9.5l-2-2h4z" fill="#fff"/></svg>
<svg style="left:453px;top:83px" width="16" height="14" viewBox="0 0 16 14"><path d="M7 3.5a5.5 5.5 0 1 1-1 8" fill="none" stroke="#fff" stroke-width="1.5"/><path d="M5.5 0.5v5h5" fill="none" stroke="#fff" stroke-width="0"/><path d="M8.5 0.8L6 3.4 8.5 6" fill="none" stroke="#fff" stroke-width="1.5"/><path d="M1 8l4-4 4 4-4 4z" fill="none" stroke="#fff" stroke-width="1.4"/></svg>
<svg style="left:608px;top:83px" width="11" height="12" viewBox="0 0 11 12"><path d="M5.5 0.5v7M2 4.5l3.5 3.5L9 4.5" fill="none" stroke="#fff" stroke-width="1.8"/><rect x="0.5" y="10" width="10" height="1.8" fill="#fff"/></svg>
<svg style="left:639.7px;top:83px" width="15" height="13" viewBox="0 0 15 13"><rect x="3" y="0.5" width="9" height="3" fill="#fff"/><rect x="0.5" y="4" width="14" height="6" rx="1" fill="#fff"/><rect x="3" y="8" width="9" height="4.5" fill="#fff" stroke="#323639" stroke-width="1"/></svg>
<div class="a" style="left:678.8px;top:84px;width:2.2px;height:2.2px;background:#fff;border-radius:50%"></div>
<div class="a" style="left:678.8px;top:89px;width:2.2px;height:2.2px;background:#fff;border-radius:50%"></div>
<div class="a" style="left:678.8px;top:94px;width:2.2px;height:2.2px;background:#fff;border-radius:50%"></div>
<div class="a" style="left:0px;top:113px;width:694px;height:3px;background:linear-gradient(#2a2d30,rgba(82,86,89,0))"></div>
<div class="a" style="left:75px;top:113px;width:538px;height:517px;overflow:hidden;background:#fff">
<div class="a" style="left:0px;top:0px;width:9.5px;height:517px;background:#f3f3f3"></div>
<div class="a" style="left:57px;top:8px;width:287px;height:10px;background:#9a9a9a;filter:blur(2px)"></div>
<div class="a" style="left:55px;top:0px;width:285px;height:10.5px;background:#d6ece8"></div>
<div class="t" style="left:77px;top:-3px;font-size:10px;color:#a8c0c4">кімен</div>
<svg style="left:378px;top:0px" width="126" height="27" viewBox="0 0 126 27"><path d="M0 0h125l-1 26L6 26z" fill="#2b4c9c"/><path d="M8 0h109l-1 18c-8 1-16 3-25 2-10-1-18 3-28 2-10-1-20 3-30 1-10-1-18 2-24 1z" fill="#f6eed5"/></svg>
<div class="a" style="left:10.3px;top:34px;width:510px;height:104.3px;background:linear-gradient(90deg,#d2ebe8 0,#d9efec 330px,#e3f3f1 420px,rgba(236,247,246,.6) 500px,rgba(255,255,255,0) 510px)"></div>
<div class="t" style="left:63.6px;top:43.5px;font-size:12.9px;font-weight:bold;color:#2a6aaa">Сұйықтық</div>
<div class="t" style="left:63.6px;top:65.5px;font-size:12.4px;color:#3f7db7">Стақандардағы сұйықтықтарды салыстыр.</div>
<div class="t" style="left:63.6px;top:82.13px;font-size:12.4px;color:#3f7db7">Бірінші стақан арқылы басқа заттарды</div>
<div class="t" style="left:63.6px;top:98.76px;font-size:12.4px;color:#3f7db7">көруге бола ма? Екінші стақан арқылы ше?</div>
<div class="t" style="left:63.6px;top:115.39px;font-size:12.4px;color:#3f7db7">Неліктен?</div>
<svg style="left:351.7px;top:44px" width="58" height="86" viewBox="0 0 58 86"><defs><clipPath id="gc3"><path d="M0 6 Q28.5 -1 57 6 L54 29.88 Q54 33.2 51 36.52 L49 76 Q28.5 84 8 76 L6 36.52 Q3 33.2 3 29.88 Z"/></clipPath></defs><path d="M0 6 Q28.5 -1 57 6 L54 29.88 Q54 33.2 51 36.52 L49 76 Q28.5 84 8 76 L6 36.52 Q3 33.2 3 29.88 Z" fill="#f6fafb" fill-opacity=".9"/><g clip-path="url(#gc3)"><rect x="0" y="21" width="57" height="64" fill="#f3ecd4"/><rect x="0" y="36.52" width="57" height="48.48" fill="#ecdcb4"/><rect x="0" y="21" width="57" height="3" fill="#fff" opacity=".35"/></g><path d="M1 7 Q28.5 15 56 7" fill="none" stroke="#8a9094" stroke-width=".9" stroke-dasharray="3 2"/><path d="M15.39 39.52 L17.099999999999998 75 M41.61 39.52 L39.9 75 M6 36.52 Q28.5 30.520000000000003 51 36.52" fill="none" stroke="#8a9094" stroke-width=".9" stroke-dasharray="3 2"/><path d="M0 6 Q28.5 -1 57 6 L54 29.88 Q54 33.2 51 36.52 L49 76 Q28.5 84 8 76 L6 36.52 Q3 33.2 3 29.88 Z" fill="none" stroke="#8a9094" stroke-width="1"/></svg>
<svg style="left:431.4px;top:44px" width="58" height="86" viewBox="0 0 58 86"><defs><clipPath id="gc4"><path d="M0 6 Q28.5 -1 57 6 L54 29.88 Q54 33.2 51 36.52 L49 76 Q28.5 84 8 76 L6 36.52 Q3 33.2 3 29.88 Z"/></clipPath></defs><path d="M0 6 Q28.5 -1 57 6 L54 29.88 Q54 33.2 51 36.52 L49 76 Q28.5 84 8 76 L6 36.52 Q3 33.2 3 29.88 Z" fill="#f6fafb" fill-opacity=".9"/><g clip-path="url(#gc4)"><rect x="0" y="20" width="57" height="65" fill="#c0e2f4"/><rect x="0" y="36.52" width="57" height="48.48" fill="#b0d8f0"/><rect x="0" y="20" width="57" height="3" fill="#fff" opacity=".35"/></g><path d="M1 7 Q28.5 15 56 7" fill="none" stroke="#8a9094" stroke-width=".9" stroke-dasharray="3 2"/><path d="M15.39 39.52 L17.099999999999998 75 M41.61 39.52 L39.9 75 M6 36.52 Q28.5 30.520000000000003 51 36.52" fill="none" stroke="#8a9094" stroke-width=".9" stroke-dasharray="3 2"/><path d="M0 6 Q28.5 -1 57 6 L54 29.88 Q54 33.2 51 36.52 L49 76 Q28.5 84 8 76 L6 36.52 Q3 33.2 3 29.88 Z" fill="none" stroke="#8a9094" stroke-width="1"/></svg>
<svg style="left:336.5px;top:35.5px" width="13.0" height="13.0" viewBox="0 0 13.0 13.0"><circle cx="6.5" cy="6.5" r="6.2" fill="#c0202f"/><text x="6.5" y="10.3" font-size="10.4" text-anchor="middle" fill="#fff" font-weight="bold" font-family="Liberation Sans">1</text></svg>
<svg style="left:417.0px;top:35.5px" width="13.0" height="13.0" viewBox="0 0 13.0 13.0"><circle cx="6.5" cy="6.5" r="6.2" fill="#c0202f"/><text x="6.5" y="10.3" font-size="10.4" text-anchor="middle" fill="#fff" font-weight="bold" font-family="Liberation Sans">2</text></svg>
<div class="t" style="left:64.2px;top:147.3px;font-size:12.4px;font-weight:bold;color:#1e5a8c">Төрт ыдыс</div>
<div class="t" style="left:64.2px;top:169.0px;font-size:12.4px;color:#4a86b8">Мына ыдыстардың</div>
<div class="t" style="left:64.2px;top:186.25px;font-size:12.4px;color:#4a86b8">қайсысын мөлдір деп</div>
<div class="t" style="left:64.2px;top:203.5px;font-size:12.4px;color:#4a86b8">атауға болады?</div>
<div class="t" style="left:64.2px;top:220.75px;font-size:12.4px;color:#4a86b8">Неліктен?</div>
<div class="t" style="left:64.2px;top:238.0px;font-size:12.4px;color:#4a86b8">Қай ыдыстар мөлдір</div>
<div class="t" style="left:64.2px;top:255.25px;font-size:12.4px;color:#4a86b8">емес?</div>
<svg style="left:206px;top:163px" width="53" height="90" viewBox="0 0 53 90"><path d="M1 6 Q26 -2 52 6 L47 84 Q26 92 6 84z" fill="#f4f9fb" stroke="#6f7478" stroke-width="1.2"/><path d="M3 28 Q26 25 50 28 L47 84 Q26 92 6 84z" fill="#c6e3f3"/><path d="M18 28 L50 28 L48 60 L20 60z" fill="#b3daf0" opacity=".6"/><path d="M1 6 Q26 14 52 6" fill="none" stroke="#8a9094"/><path d="M6 76 Q26 70 47 76" fill="none" stroke="#8a9094" stroke-dasharray="3 2"/><path d="M1 6 Q26 -2 52 6 L47 84 Q26 92 6 84z" fill="none" stroke="#6f7478" stroke-width="1.2"/></svg>
<svg style="left:44px;top:292px" width="78" height="63" viewBox="0 0 78 63"><path d="M56 10 C72 8 80 18 74 32 C70 42 60 46 54 44" fill="none" stroke="#d42a2a" stroke-width="6"/><path d="M2 4 Q31 -2 60 4 L58 30 Q55 56 40 60 L22 60 Q6 56 3 30z" fill="#e22a2a" stroke="#9a1818" stroke-width="1"/><ellipse cx="31" cy="6" rx="28" ry="4.5" fill="#f0a0a0" stroke="#a01818" stroke-width="1"/><ellipse cx="31" cy="7" rx="22" ry="3" fill="#a8614a"/><path d="M12 14 Q10 35 18 50" stroke="#f26060" stroke-width="3" fill="none"/><path d="M22 58 Q31 62 40 58" stroke="#b01c1c" stroke-width="2" fill="none"/></svg>
<svg style="left:130.5px;top:284.5px" width="56" height="76" viewBox="0 0 56 76"><path d="M1 5 Q27 -2 54 5 L50 70 Q27 77 6 70z" fill="#eef7fa" stroke="#777" stroke-width="1"/><path d="M3 22 Q27 18 52 22 L50 68 Q27 75 6 68z" fill="#f0952a"/><path d="M3 22 Q27 26 52 22" fill="none" stroke="#f6b060" stroke-width="1.5"/><path d="M12 36 L14 66 M42 36 L40 66 M4 38 Q27 26 51 38" fill="none" stroke="#c87018" stroke-dasharray="3 2"/><path d="M1 5 Q27 12 54 5" fill="none" stroke="#889"/><path d="M1 5 Q27 -2 54 5 L50 70 Q27 77 6 70z" fill="none" stroke="#666" stroke-width="1"/></svg>
<svg style="left:202.5px;top:287.5px" width="57" height="72" viewBox="0 0 57 72"><defs><linearGradient id="pc" x1="0" x2="1"><stop offset="0" stop-color="#d8d8d8"/><stop offset=".45" stop-color="#fafafa"/><stop offset="1" stop-color="#b8b8b8"/></linearGradient></defs><path d="M1 6 L56 6 L47 68 Q28 72 10 68z" fill="url(#pc)" stroke="#666" stroke-width="1"/><ellipse cx="28.5" cy="6" rx="27.5" ry="5" fill="#f0f0f0" stroke="#666"/><ellipse cx="28.5" cy="7.5" rx="20" ry="2.5" fill="#4a3020"/></svg>
<div class="a" style="left:279.3px;top:150px;width:222.7px;height:226.7px;background:#fde9d9"></div>
<svg style="left:278px;top:150px" width="4" height="227" viewBox="0 0 4 227"><path d="M2 1v226" stroke="#e6a14a" stroke-width="2.2" stroke-dasharray="2 2.6"/></svg>
<div class="t" style="left:288.7px;top:155.5px;font-size:12.4px;font-weight:bold;color:#ea8e36">Зертте</div>
<div class="t" style="left:288.7px;top:171px;font-size:11.8px;color:#3a3a3a">Сыныптағы мөлдір заттарды тап.</div>
<div class="t" style="left:288.7px;top:186.2px;font-size:11.8px;color:#3a3a3a">Оларды қалай анықтадың?</div>
<svg style="left:302.8px;top:212.1px" width="176.5" height="160" viewBox="0 0 176.5 160"><rect width="176.5" height="160" fill="#7ccabc"/><rect x="0" y="92" width="176.5" height="68" fill="#5b82cf"/><rect x="0" y="82" width="52" height="13" fill="#c9d2d0"/><rect x="2" y="6" width="13" height="30" fill="#f2f4ea" stroke="#5aa86a" stroke-width="2"/><rect x="0" y="38" width="8" height="24" fill="#d88ad0"/><rect x="2" y="44" width="5" height="8" fill="#fff"/><rect x="50" y="0" width="53" height="92" fill="#d9a862"/><rect x="50" y="0" width="3" height="92" fill="#b88848"/><rect x="100" y="0" width="3" height="92" fill="#b88848"/><rect x="62" y="2" width="13" height="40" fill="#b8dcea"/><rect x="56" y="18" width="4" height="26" fill="#9aa8b8"/><rect x="103" y="0" width="22" height="90" fill="#8ad0c4"/><rect x="123" y="0" width="12" height="100" fill="#eef0f0"/><rect x="128" y="0" width="4" height="100" fill="#c8c8cc"/><rect x="135" y="0" width="41.5" height="78" fill="#c8e8e8"/><rect x="135" y="0" width="41.5" height="5" fill="#4a78c8"/><rect x="155" y="0" width="3" height="78" fill="#5a6a7a"/><path d="M158 5 L176 5 L176 20 Z" fill="#4a78c8"/><path d="M123 60 L176 100 L176 160 L123 160z" fill="#e8eef0"/><path d="M137 75 L176 75 L176 160 L137 160z" fill="#c9984e"/><path d="M141 90 L176 100 L176 160 L141 160z" fill="#9ad8c0"/><path d="M137 75 L176 75 L176 82 L140 82z" fill="#d8a860"/><path d="M125 125 L176 118 L176 160 L122 160z" fill="#f4f09a" opacity=".55"/><circle cx="37" cy="28" r="10" fill="#f2c8a6"/><path d="M26 26 Q28 12 39 13 Q49 14 48 26 Q44 18 37 19 Q30 20 26 26z" fill="#b8502a"/><path d="M22 46 L52 46 L54 84 L22 84z" fill="#f6f6f6"/><path d="M26 46 L48 46 L49 80 L25 80z" fill="#2d58a8"/><path d="M24 80 L48 80 L46 136 L26 136z" fill="#8a8a8a"/><rect x="23" y="134" width="11" height="7" rx="2" fill="#2a2a2a"/><rect x="36" y="136" width="11" height="7" rx="2" fill="#2a2a2a"/><ellipse cx="17" cy="62" rx="8" ry="15" transform="rotate(-25 17 62)" fill="#d8eef0" stroke="#7aa8b8"/><path d="M98 40 Q98 22 112 24 Q124 26 122 46 L124 76 Q112 70 100 80z" fill="#2a2424"/><circle cx="115" cy="39" r="8" fill="#f2c8a6"/><path d="M102 50 L118 48 L136 30 L142 36 L124 62 L126 84 L104 84z" fill="#f6f6f6"/><path d="M106 62 L125 62 L125 84 L106 84z" fill="#2d58a8"/><path d="M104 82 L128 82 L133 114 L100 114z" fill="#8c8c90"/><rect x="108" y="114" width="5" height="30" fill="#f2d0b8"/><rect x="117" y="114" width="5" height="30" fill="#f2d0b8"/><rect x="107" y="138" width="6" height="8" fill="#fff"/><rect x="116" y="138" width="6" height="8" fill="#fff"/><rect x="104" y="146" width="12" height="8" rx="2" fill="#1a1a1a"/><rect x="116" y="144" width="13" height="8" rx="2" fill="#1a1a1a"/><path d="M136 4 L148 4 L150 40 L136 40z" fill="#d8e8e8" stroke="#8aa" stroke-width=".8"/><circle cx="76" cy="62" r="13" fill="#f2c8a6"/><path d="M62 60 Q60 42 78 44 Q92 46 90 60 Q84 52 76 53 Q68 54 62 60z" fill="#2a2020"/><path d="M49 80 L99 80 L103 132 L49 132z" fill="#f6f6f6"/><path d="M55 82 L89 82 L91 136 L55 136z" fill="#2d58a8"/><path d="M64 82 L74 94 L84 82z" fill="#f6f6f6"/><path d="M72 86 L76 86 L75 96 L73 96z" fill="#20305a"/><path d="M57 134 L91 134 L90 160 L58 160z" fill="#8a8a8a"/><path d="M92 112 L124 122 L122 132 L90 124z" fill="#b02028"/><ellipse cx="124" cy="127" rx="4" ry="6" fill="#f8e870"/><path d="M88 118 Q100 120 110 130 L104 134 Q96 126 86 126z" fill="#f2c8a6"/><rect x="0" y="0" width="176.5" height="160" fill="none" stroke="#b8c0c0" stroke-width=".6"/></svg>
<div class="a" style="left:63px;top:395px;width:439.3px;height:58.2px;background:#fadde5"></div>
<svg style="left:62px;top:394px" width="442" height="61" viewBox="0 0 442 61"><rect x="1.5" y="1.5" width="439" height="58" rx="3" fill="none" stroke="#d23a78" stroke-width="2.2" stroke-dasharray="0.1 4" stroke-linecap="round"/></svg>
<div class="a" style="left:66.5px;top:379.7px;width:108.5px;height:26.6px;background:linear-gradient(#e0307a,#c41a5e);border-radius:12px 12px 12px 12px;box-shadow:0 1px 1px rgba(0,0,0,.25)"></div>
<div class="t" style="left:80.5px;top:386.3px;font-size:13.2px;font-weight:bold;color:#fff;letter-spacing:.2px">Есте сақта!</div>
<div class="t" style="left:80.5px;top:414px;font-size:12.7px;color:#333">Мөлдір заттар арқылы басқа нысандарды көруге болады.</div>
<div class="a" style="left:9.5px;top:477px;width:528.8px;height:36px;background:linear-gradient(90deg,#9488d0,#8b80cd 300px,#8b80cd)"></div>
<svg style="left:9.5px;top:453.5px" width="72" height="60" viewBox="0 0 72 60"><path d="M0 5 Q28 -4 50 6 Q70 18 70 60 L0 60z" fill="#8a82d0" stroke="#7a70c0" stroke-width="1.2"/></svg>
<div class="a" style="left:9.5px;top:513px;width:528.8px;height:4px;background:#fff"></div>
<div class="t" style="left:44.5px;top:479.5px;font-size:11.5px;font-weight:bold;color:#fff">74</div>
<div class="t" style="left:106px;top:481px;font-size:8.8px;font-weight:bold;color:#fff;letter-spacing:-.1px">7-тарау. Табиғат физикасы</div>
<div class="t" style="left:168px;top:500px;font-size:8px;color:#a79ed6">Книга предоставлена исключительно в образовательных целях</div>
<div class="t" style="left:106px;top:509px;font-size:8px;color:#c9c3e8">согласно Приказа Министра образования и науки Республики Казахстан от 17 мая 2019 года № 217</div>
</div>
<div class="a" style="left:71px;top:639px;width:545px;height:160px;overflow:hidden;background:#fff">
<div class="a" style="left:0px;top:0px;width:545px;height:160px;background:#fff"></div>
<svg style="left:0px;top:0px" width="545" height="160" viewBox="0 0 545 160"><path d="M0 0H545V46L0 89z" fill="#e6e3f3"/><rect x="0" y="0" width="3" height="89" fill="#8e7fd0"/><rect x="536" y="0" width="9" height="160" fill="#f0f0f0"/></svg>
<div class="t" style="left:172px;top:-1.5px;font-size:10.5px;color:#a99ee0">Все учебники Казахстана на OKULYK.KZ</div>
<div class="t" style="left:45px;top:51.5px;font-size:13.3px;font-weight:bold;color:#2a80c0">Түрлі түсті сусындар</div>
<div class="t" style="left:45px;top:74px;font-size:12.8px;color:#48a0c8">Қандай ерітінді жарықты көбірек өткізеді? Қайсысы азырақ</div>
<div class="t" style="left:45px;top:91.5px;font-size:12.8px;color:#48a0c8">өткізеді? Неліктен? Себебін түсіндір.</div>
<svg style="left:62.0px;top:122.0px" width="15.0" height="15.0" viewBox="0 0 15.0 15.0"><circle cx="7.5" cy="7.5" r="7.2" fill="#c0202f"/><text x="7.5" y="11.3" font-size="12.0" text-anchor="middle" fill="#fff" font-weight="bold" font-family="Liberation Sans">1</text></svg>
<svg style="left:201.8px;top:122.0px" width="15.0" height="15.0" viewBox="0 0 15.0 15.0"><circle cx="7.5" cy="7.5" r="7.2" fill="#c0202f"/><text x="7.5" y="11.3" font-size="12.0" text-anchor="middle" fill="#fff" font-weight="bold" font-family="Liberation Sans">2</text></svg>
<svg style="left:346.3px;top:122.0px" width="15.0" height="15.0" viewBox="0 0 15.0 15.0"><circle cx="7.5" cy="7.5" r="7.2" fill="#c0202f"/><text x="7.5" y="11.3" font-size="12.0" text-anchor="middle" fill="#fff" font-weight="bold" font-family="Liberation Sans">3</text></svg>
<svg style="left:82px;top:126px" width="82" height="30" viewBox="0 0 82 30"><path d="M1 8 Q41 -4 81 8 L79 30 L3 30z" fill="#eef7fb" stroke="#6a6f73" stroke-width="1.2"/><path d="M3 10 Q41 20 79 10" fill="none" stroke="#6a6f73" stroke-dasharray="4 2"/></svg>
<svg style="left:225.5px;top:126px" width="82" height="30" viewBox="0 0 82 30"><path d="M1 8 Q41 -4 81 8 L79 30 L3 30z" fill="#eef7fb" stroke="#6a6f73" stroke-width="1.2"/><path d="M3 10 Q41 20 79 10" fill="none" stroke="#6a6f73" stroke-dasharray="4 2"/></svg>
<svg style="left:372.5px;top:126px" width="82" height="30" viewBox="0 0 82 30"><path d="M1 8 Q41 -4 81 8 L79 30 L3 30z" fill="#eef7fb" stroke="#6a6f73" stroke-width="1.2"/><path d="M3 10 Q41 20 79 10" fill="none" stroke="#6a6f73" stroke-dasharray="4 2"/></svg>
</div>
<div class="a" style="left:694px;top:113px;width:15px;height:680px;background:#f1f1f1"></div>
<svg style="left:698px;top:117px" width="7" height="4" viewBox="0 0 7 4"><path d="M0 4h7L3.5 0z" fill="#505050"/></svg>
<svg style="left:698px;top:784px" width="7" height="4" viewBox="0 0 7 4"><path d="M0 0h7L3.5 4z" fill="#505050"/></svg>
<div class="a" style="left:696px;top:618px;width:11px;height:14px;background:#c1c1c1"></div>
<div class="a" style="left:0px;top:793px;width:694px;height:15px;background:#f1f1f1"></div>
<svg style="left:5px;top:797px" width="4" height="7" viewBox="0 0 4 7"><path d="M4 0v7L0 3.5z" fill="#505050"/></svg>
<svg style="left:685px;top:797px" width="4" height="7" viewBox="0 0 4 7"><path d="M0 0v7L4 3.5z" fill="#505050"/></svg>
<div class="a" style="left:136px;top:795px;width:425px;height:11px;background:#c1c1c1"></div>
<div class="a" style="left:694px;top:793px;width:15px;height:15px;background:#dcdcdc"></div>
</div>
<div class="a" style="left:0px;top:867px;width:1600px;height:33px;background:#0f161c"></div>
<svg style="left:12.7px;top:875.4px" width="15" height="15" viewBox="0 0 15 15"><path d="M0 2.2L6 1.3V7H0zM7 1.1L15 0v7H7zM0 8h6v5.8L0 12.9zM7 8h8v7L7 13.9z" fill="#fff"/></svg>
<svg style="left:52.8px;top:875.5px" width="15" height="15" viewBox="0 0 15 15"><circle cx="9.3" cy="5.7" r="4.8" fill="none" stroke="#fff" stroke-width="1.3"/><path d="M5.8 9.2L0.6 14.4" stroke="#fff" stroke-width="1.5"/></svg>
<svg style="left:90.5px;top:877.5px" width="19" height="12" viewBox="0 0 19 12"><rect x="4" y="0.7" width="11" height="10.6" fill="none" stroke="#fff" stroke-width="1.3"/><path d="M2 2.5H0.7v7H2M17 2.5h1.3v7H17" fill="none" stroke="#fff" stroke-width="1.2"/></svg>
<div class="a" style="left:122.2px;top:867px;width:36.7px;height:33px;background:#343a40"></div>
<div class="a" style="left:158.9px;top:867px;width:3.5px;height:33px;background:#1b2228"></div>
<div class="a" style="left:122.2px;top:898px;width:36.7px;height:2px;background:#76b9ed"></div>
<div class="a" style="left:166.6px;top:898px;width:33.3px;height:2px;background:#76b9ed"></div>
<div class="a" style="left:207.2px;top:898px;width:34.1px;height:2px;background:#76b9ed"></div>
<svg style="left:133px;top:873.8px" width="19" height="19" viewBox="0 0 19 19"><rect x="7" y="2" width="11" height="15" fill="#fff"/><path d="M9 5h7M9 7.5h7M9 10h7M9 12.5h7M9 15h7" stroke="#41609a" stroke-width="1"/><path d="M0 2.5L11 0.5V18.5L0 16.5z" fill="#2b579a"/><text x="5.3" y="12.5" font-size="8" font-weight="bold" fill="#fff" text-anchor="middle" font-family="Liberation Sans">W</text></svg>
<svg style="left:174px;top:875.5px" width="19" height="16" viewBox="0 0 19 16"><path d="M0 1.5h7l2 2h10v12H0z" fill="#f6c94f"/><path d="M0 5h19v10.5H0z" fill="#ffe08a"/><rect x="4" y="9.5" width="11" height="3" fill="#2d8fd8"/><rect x="5.5" y="12" width="2.5" height="4" fill="#2d8fd8"/><rect x="11" y="12" width="2.5" height="4" fill="#2d8fd8"/></svg>
<svg style="left:214.5px;top:874px" width="19.5" height="19.5" viewBox="0 0 19.5 19.5"><circle cx="9.75" cy="9.75" r="9.5" fill="#db4437"/><path d="M9.75 9.75L1.5 5A9.5 9.5 0 0 0 5 17.5z" fill="#0f9d58"/><path d="M9.75 9.75L5 17.5A9.5 9.5 0 0 0 18.5 6z" fill="#ffcd40"/><path d="M9.75 9.75L18.5 6A9.5 9.5 0 0 0 1.5 5z" fill="#db4437"/><path d="M9.75 5.4h8.8" stroke="#db4437" stroke-width="0"/><circle cx="9.75" cy="9.75" r="4.4" fill="#fff"/><circle cx="9.75" cy="9.75" r="3.5" fill="#4285f4"/></svg>
<svg style="left:1395px;top:880px" width="11" height="6" viewBox="0 0 11 6"><path d="M0.5 5.5L5.5 0.8l5 4.7" fill="none" stroke="#fff" stroke-width="1.2"/></svg>
<svg style="left:1413.5px;top:877.5px" width="15" height="13" viewBox="0 0 15 13"><path d="M4 9A7 7 0 0 1 14 2M6 10.5A5 5 0 0 1 13 5M8 11.5A3 3 0 0 1 12 8" fill="none" stroke="#9a9a9a" stroke-width="1"/><circle cx="13" cy="11.5" r="1" fill="#aaa"/><circle cx="4" cy="9" r="3.6" fill="#e81123"/><path d="M2.5 7.5l3 3M5.5 7.5l-3 3" stroke="#fff" stroke-width="1"/></svg>
<svg style="left:1435px;top:879.5px" width="14" height="12" viewBox="0 0 14 12"><rect x="0.5" y="1.5" width="12" height="7" fill="none" stroke="#fff" stroke-width="1.1"/><rect x="2" y="3" width="2" height="4" fill="#fff"/><circle cx="9.5" cy="8" r="3.5" fill="#2aa83a"/><path d="M9.5 6v4M8 7.5l1.5-1.5 1.5 1.5" stroke="#fff" stroke-width=".8" fill="none"/></svg>
<svg style="left:1453.5px;top:877px" width="15" height="13" viewBox="0 0 15 13"><path d="M0.5 4.5h3l4-3.5v11l-4-3.5h-3z" fill="none" stroke="#fff" stroke-width="1.1"/><path d="M9.5 4.5a3 3 0 0 1 0 4M11.3 2.8a5.5 5.5 0 0 1 0 7.4M13 1a8 8 0 0 1 0 11" fill="none" stroke="#fff" stroke-width="1.1"/></svg>
<div class="t" style="left:1477px;top:878.5px;font-size:10.6px;color:#fff;letter-spacing:-.3px">ҚАЗ</div>
<div class="t" style="left:1517px;top:871px;font-size:10px;color:#fff;letter-spacing:-.3px">15:02</div>
<div class="t" style="left:1506px;top:886px;font-size:10px;color:#fff;letter-spacing:-.45px">29.03.2021</div>
<svg style="left:1565px;top:876.5px" width="16" height="14" viewBox="0 0 16 14"><path d="M0.6 0.6h14.8v9.8h-6l-3 3v-3H0.6z" fill="none" stroke="#fff" stroke-width="1.1"/><circle cx="12.5" cy="11" r="2" fill="#0f161c" stroke="#fff" stroke-width=".9"/></svg>
<div class="a" style="left:1596px;top:867px;width:2px;height:33px;background:#6a6e72"></div></body></html>
